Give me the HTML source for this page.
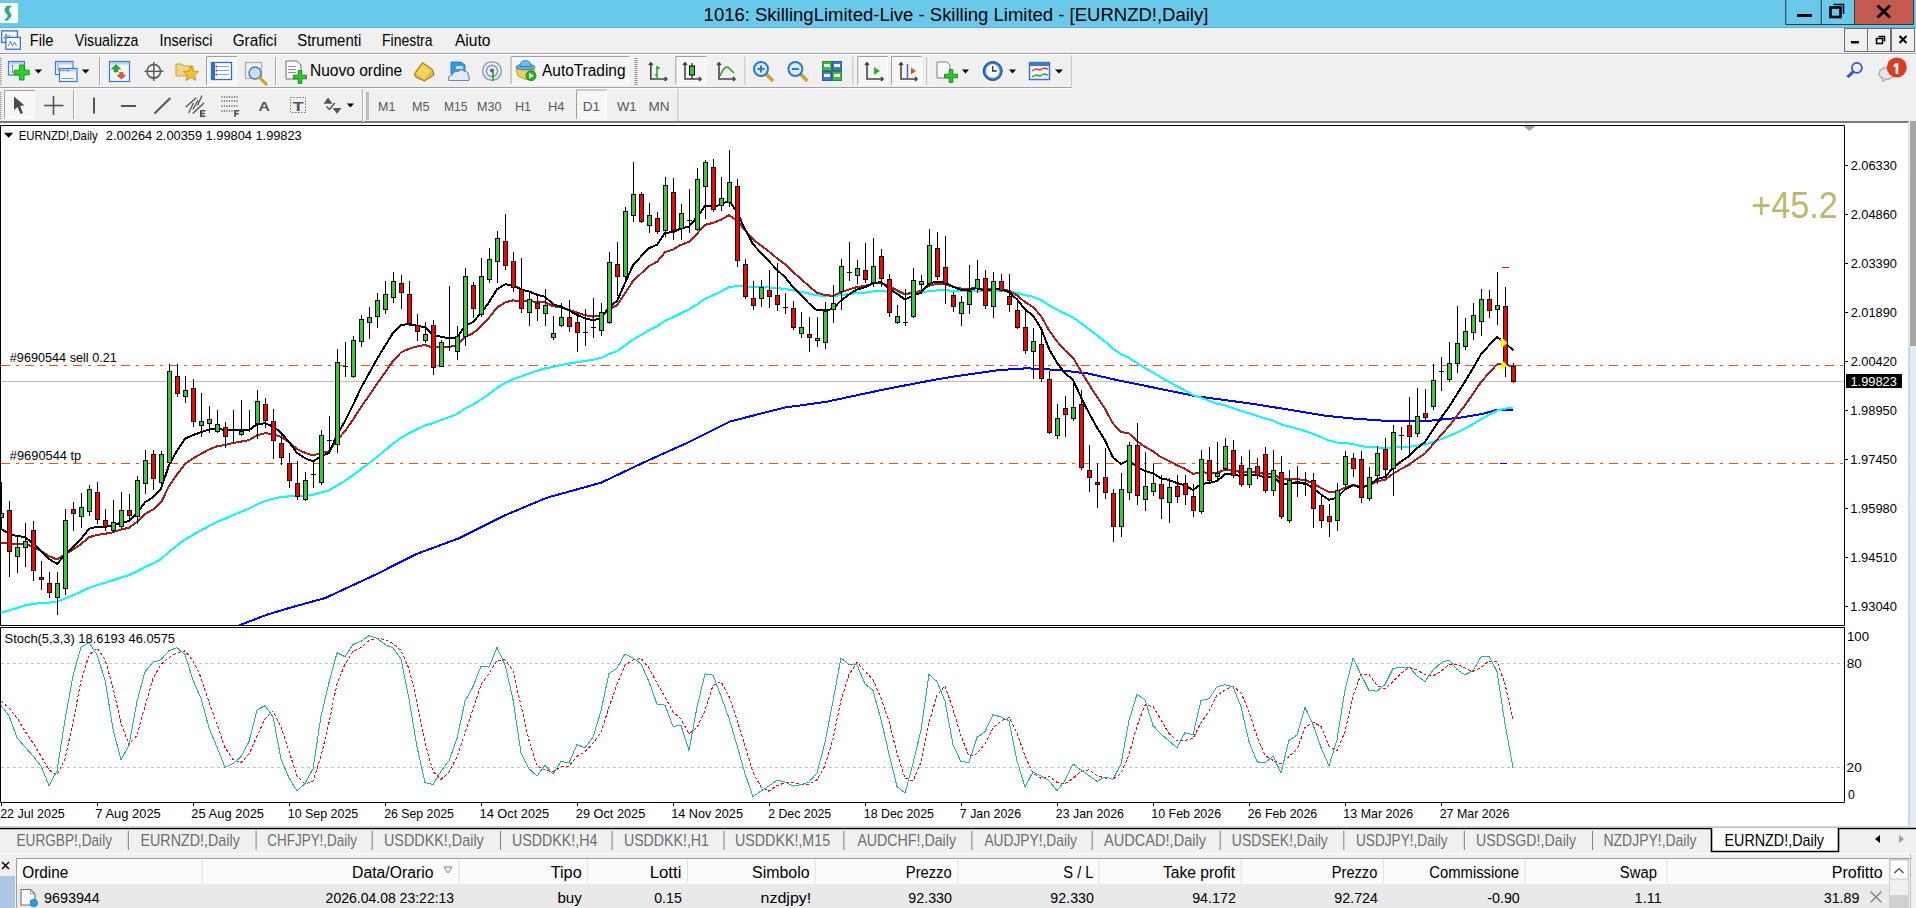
<!DOCTYPE html>
<html><head><meta charset="utf-8"><style>
html,body{margin:0;padding:0;background:#F0F0F0;overflow:hidden;width:1916px;height:908px}
svg{display:block;font-family:"Liberation Sans", sans-serif}
</style></head><body>
<svg width="1916" height="908" viewBox="0 0 1916 908" shape-rendering="auto">
<rect x="0" y="0" width="1916" height="908" fill="#F0F0F0" />
<rect x="0" y="0" width="1916" height="27" fill="#69C9EA" />
<line x1="0" y1="27.5" x2="1916" y2="27.5" stroke="#5BB3D2" stroke-width="1" />
<rect x="0" y="3" width="18" height="20" fill="#FFFFFF" />
<path d="M6.5,5.7 L12,5.7 L9.5,8.6 Q8.2,10.2 9.6,11.8 L11.2,13.8 Q12.2,15.5 10.6,17.4 L7.4,20.6 L3.9,20.6 L7.2,17.2 Q8.2,16 7.2,14.6 L5,12.2 Q3.8,10.4 5,8.6 Z" fill="#22AE8A"/>
<text x="703.61" y="20.7" font-size="18.6" fill="#000" font-weight="normal" textLength="504.73" lengthAdjust="spacingAndGlyphs" >1016: SkillingLimited-Live - Skilling Limited - [EURNZD!,Daily]</text>
<rect x="1854.5" y="0" width="59" height="24.5" fill="#C45A50" />
<path d="M1785.8,0 V24.5 H1913.5 V0 M1821.2,0 V24.5 M1854.5,0 V24.5" fill="none" stroke="#383838" stroke-width="1"/>
<rect x="1797" y="14" width="15" height="3" fill="#000" />
<path d="M1833.5,4.5 h10 v9.5" fill="none" stroke="#000" stroke-width="1.5"/><rect x="1830.5" y="7.5" width="10" height="9.5" fill="none" stroke="#000" stroke-width="2.6"/>
<path d="M1877.5,5.5 L1890,17.5 M1890,5.5 L1877.5,17.5" stroke="#000" stroke-width="3"/>
<rect x="0" y="28" width="1916" height="25" fill="#F0F0F0" />
<line x1="0" y1="53.5" x2="1916" y2="53.5" stroke="#A0A0A0" stroke-width="1" />
<rect x="1.7" y="30.9" width="15.7" height="11.5" fill="#F4F8FF" stroke="#3A6ED8" stroke-width="1.3" />
<path d="M4,39 l2,-5 l2,4 l2,-3" fill="none" stroke="#4A7AE0" stroke-width="1"/>
<rect x="5.9" y="37.4" width="14.4" height="11.8" fill="#FFFFFF" stroke="#3A6ED8" stroke-width="1.3" />
<path d="M8.5,46 l2,-5 l2,5 l2,-4 l2,4" fill="none" stroke="#4A7AE0" stroke-width="1"/>
<text x="29.83" y="46.3" font-size="16.4" fill="#000" font-weight="normal" textLength="23.66" lengthAdjust="spacingAndGlyphs" >File</text>
<text x="74.73" y="46.3" font-size="16.4" fill="#000" font-weight="normal" textLength="63.76" lengthAdjust="spacingAndGlyphs" >Visualizza</text>
<text x="159.50" y="46.3" font-size="16.4" fill="#000" font-weight="normal" textLength="52.98" lengthAdjust="spacingAndGlyphs" >Inserisci</text>
<text x="232.63" y="46.3" font-size="16.4" fill="#000" font-weight="normal" textLength="44.33" lengthAdjust="spacingAndGlyphs" >Grafici</text>
<text x="297.23" y="46.3" font-size="16.4" fill="#000" font-weight="normal" textLength="64.01" lengthAdjust="spacingAndGlyphs" >Strumenti</text>
<text x="381.98" y="46.3" font-size="16.4" fill="#000" font-weight="normal" textLength="50.55" lengthAdjust="spacingAndGlyphs" >Finestra</text>
<text x="454.90" y="46.3" font-size="16.4" fill="#000" font-weight="normal" textLength="35.51" lengthAdjust="spacingAndGlyphs" >Aiuto</text>
<rect x="1844.5" y="28.5" width="23" height="23" fill="#F0F0F0" stroke="#707070" stroke-width="1" />
<rect x="1867.5" y="28.5" width="23" height="23" fill="#F0F0F0" stroke="#707070" stroke-width="1" />
<rect x="1891.5" y="28.5" width="23" height="23" fill="#F0F0F0" stroke="#707070" stroke-width="1" />
<rect x="1851" y="41" width="8" height="2.5" fill="#000" />
<path d="M1876.5,38.5 h6 v5 h-6 z M1878.5,36.5 h6 v5" fill="none" stroke="#000" stroke-width="1.5"/>
<path d="M1899.5,36 L1906.5,43 M1906.5,36 L1899.5,43" stroke="#000" stroke-width="2"/>
<line x1="0" y1="54.5" x2="1916" y2="54.5" stroke="#FFFFFF" stroke-width="1" />
<line x1="0" y1="87.5" x2="1071.5" y2="87.5" stroke="#A0A0A0" stroke-width="1" />
<line x1="0" y1="88.5" x2="1072" y2="88.5" stroke="#FFFFFF" stroke-width="1" />
<rect x="0" y="121" width="1908.7" height="2" fill="#7A7A7A" />
<rect x="0" y="123" width="1908" height="705" fill="#FFFFFF"/>
<rect x="-1.5" y="58" width="3" height="1" fill="#8C8C8C" />
<rect x="-1.5" y="60" width="3" height="1" fill="#8C8C8C" />
<rect x="-1.5" y="62" width="3" height="1" fill="#8C8C8C" />
<rect x="-1.5" y="64" width="3" height="1" fill="#8C8C8C" />
<rect x="-1.5" y="66" width="3" height="1" fill="#8C8C8C" />
<rect x="-1.5" y="68" width="3" height="1" fill="#8C8C8C" />
<rect x="-1.5" y="70" width="3" height="1" fill="#8C8C8C" />
<rect x="-1.5" y="72" width="3" height="1" fill="#8C8C8C" />
<rect x="-1.5" y="74" width="3" height="1" fill="#8C8C8C" />
<rect x="-1.5" y="76" width="3" height="1" fill="#8C8C8C" />
<rect x="-1.5" y="78" width="3" height="1" fill="#8C8C8C" />
<rect x="-1.5" y="80" width="3" height="1" fill="#8C8C8C" />
<rect x="-1.5" y="82" width="3" height="1" fill="#8C8C8C" />
<rect x="-1.5" y="84" width="3" height="1" fill="#8C8C8C" />
<rect x="8.5" y="61.5" width="16" height="13.5" fill="#F2F7FD" stroke="#3C7BD0" stroke-width="1.2" />
<rect x="9" y="62" width="15" height="2.5" fill="#B8D2F0" />
<path d="M12.5,65 v8 M11,66.5 l1.5,-1.5 l1.5,1.5 M11,71.5 l1.5,1.5 l1.5,-1.5" fill="none" stroke="#7A9AC0" stroke-width="1"/>
<path d="M19.4,65.0 h4.6 v5.2 h5.2 v4.6 h-5.2 v5.2 h-4.6 v-5.2 h-5.2 v-4.6 h5.2 z" fill="#2AD42A" stroke="#129A12" stroke-width="1"/>
<path d="M34.7,69.5 L42,69.5 L38.35,73.5 Z" fill="#000"/>
<rect x="55.5" y="61.5" width="17.5" height="13" fill="#F2F7FD" stroke="#3C7BD0" stroke-width="1.2" />
<rect x="56" y="62" width="16.5" height="2.5" fill="#B8D2F0" />
<rect x="59.5" y="68.5" width="17.5" height="13" fill="#F2F7FD" stroke="#3C7BD0" stroke-width="1.2" />
<rect x="60" y="69" width="16.5" height="2.5" fill="#B8D2F0" />
<path d="M58,64.5 v6 h11 M67.5,69 l1.5,1.5 l-1.5,1.5 M61.5,78.5 h12" fill="none" stroke="#7A9AC0" stroke-width="1"/>
<path d="M81.8,69.5 L89.4,69.5 L85.6,73.5 Z" fill="#000"/>
<line x1="99.5" y1="57" x2="99.5" y2="85" stroke="#A8A8A8" stroke-width="1" />
<line x1="100.5" y1="57" x2="100.5" y2="85" stroke="#FFFFFF" stroke-width="1" />
<rect x="109.5" y="61.5" width="20" height="20" fill="#F2F7FD" stroke="#3C7BD0" stroke-width="1.2" />
<rect x="110" y="62" width="19" height="2.5" fill="#B8D2F0" />
<path d="M111.4,69 l4.6,-4.5 l4.6,4.5 h-2.8 v3 h-3.6 v-3 z" fill="#22B022" stroke="#128012" stroke-width="0.6"/><path d="M117,75.3 l4.35,3.6 l4.35,-3.6 h-2.6 v-2.8 h-3.5 v2.8 z" fill="#E85A2A" stroke="#B03A10" stroke-width="0.6"/>
<circle cx="153.8" cy="71.3" r="6.8" fill="none" stroke="#555" stroke-width="1.6"/>
<line x1="144.5" y1="71.3" x2="163.5" y2="71.3" stroke="#555" stroke-width="1.4" />
<line x1="153.8" y1="62" x2="153.8" y2="81" stroke="#555" stroke-width="1.4" />
<path d="M176,64 h6 l2,2 h9 v10 h-17 z" fill="#F3D77A" stroke="#C8A040" stroke-width="1"/>
<path d="M191,66 l2.3,5 5.4,0.6 -4,3.6 1.2,5.3 -4.9,-2.8 -4.9,2.8 1.2,-5.3 -4,-3.6 5.4,-0.6 z" fill="#F5C030" stroke="#B88A10" stroke-width="0.8"/>
<rect x="206" y="56" width="31" height="29" fill="#F6F6F6" />
<path d="M206.5,85 V56.5 H237" fill="none" stroke="#A0A0A0" stroke-width="1"/>
<path d="M207,84.5 H236.5 V57" fill="none" stroke="#FFFFFF" stroke-width="1"/>
<rect x="211.5" y="62.5" width="20" height="17" fill="#FFFFFF" stroke="#2F6FC0" stroke-width="1.3" />
<rect x="212" y="63" width="3" height="16" fill="#2F6FC0" />
<line x1="217" y1="66.5" x2="229" y2="66.5" stroke="#7BA7DA" stroke-width="1" />
<rect x="215.5" y="65.5" width="1.5" height="2" fill="#D03030" />
<line x1="217" y1="70.5" x2="229" y2="70.5" stroke="#7BA7DA" stroke-width="1" />
<rect x="215.5" y="69.5" width="1.5" height="2" fill="#D03030" />
<line x1="217" y1="74.5" x2="229" y2="74.5" stroke="#7BA7DA" stroke-width="1" />
<rect x="215.5" y="73.5" width="1.5" height="2" fill="#D03030" />
<rect x="245.5" y="62.5" width="16" height="16" fill="#F0F0F0" stroke="#B0B0B0" stroke-width="1.3" />
<circle cx="255" cy="73" r="6" fill="#C8DDF0" stroke="#4A7FC0" stroke-width="1.5"/>
<line x1="259" y1="77" x2="267" y2="85" stroke="#D4A020" stroke-width="3" />
<line x1="275.5" y1="57" x2="275.5" y2="85" stroke="#A8A8A8" stroke-width="1" />
<line x1="276.5" y1="57" x2="276.5" y2="85" stroke="#FFFFFF" stroke-width="1" />
<path d="M286,61 h11 l4,4 v14 h-15 z" fill="#FAFAFA" stroke="#707070" stroke-width="1"/>
<line x1="288" y1="66.5" x2="296" y2="66.5" stroke="#909090" stroke-width="1" />
<line x1="288" y1="69.5" x2="296" y2="69.5" stroke="#909090" stroke-width="1" />
<line x1="288" y1="72.5" x2="296" y2="72.5" stroke="#909090" stroke-width="1" />
<path d="M298.2,70.5 h3.6 v4.7 h4.7 v3.6 h-4.7 v4.7 h-3.6 v-4.7 h-4.7 v-3.6 h4.7 z" fill="#28C828" stroke="#0A7A0A" stroke-width="0.8"/>
<text x="310.06" y="76.1" font-size="16" fill="#000" font-weight="normal" textLength="92.19" lengthAdjust="spacingAndGlyphs" >Nuovo ordine</text>
<path d="M414.5,73.5 L422.5,62.5 L432.5,69.5 L434,75 L424.5,81 L415.5,77 Z" fill="#E9B93A" stroke="#9A6A14" stroke-width="1"/><path d="M416,74 L423,64.5 L431,70.5 L424,79 Z" fill="#F6D65A"/>
<path d="M451,62 h10 l4,3 v9 h-14 z" fill="#2E9AF0" stroke="#1A6AC0" stroke-width="0.8"/><rect x="456" y="66" width="7" height="3" fill="#BFE3FF"/>
<path d="M449,80.5 q-1.5,-4.5 3,-5.5 q1,-4 6,-3.5 q3,-3 7,0 q4,0 3,4 q2.5,1.5 0.5,5 z" fill="#E4ECF6" stroke="#6C88B0" stroke-width="1.1"/>
<circle cx="492" cy="71" r="9.3" fill="none" stroke="#8FA2BE" stroke-width="1.6"/><circle cx="492" cy="71" r="5.6" fill="none" stroke="#8A9AB2" stroke-width="1.6"/><circle cx="492" cy="70.6" r="2" fill="#2A62D0"/><path d="M493,71 v10" stroke="#2BB02B" stroke-width="1.8"/>
<rect x="510.5" y="56" width="118.5" height="28.5" fill="#F6F6F6" />
<path d="M511.0,84.5 V56.5 H629" fill="none" stroke="#A0A0A0" stroke-width="1"/>
<path d="M511.5,84.0 H628.5 V57" fill="none" stroke="#FFFFFF" stroke-width="1"/>
<path d="M518,76 l-2,-7 h19 l-2,6 l-6,5 z" fill="#F2D24A" stroke="#B08A18" stroke-width="0.8"/>
<ellipse cx="525.5" cy="67" rx="9.5" ry="3" fill="#5AB0E6" stroke="#2A78B8" stroke-width="0.8"/><path d="M520,66.5 q0,-6 5.5,-6 q5.5,0 5.5,6 z" fill="#6ABCF0" stroke="#2A78B8" stroke-width="0.8"/>
<circle cx="531" cy="75.7" r="5" fill="#22B422" stroke="#128012" stroke-width="0.8"/><path d="M529.3,72.8 l4.6,2.9 l-4.6,2.9 z" fill="#FFF"/>
<text x="542.00" y="76.0" font-size="16" fill="#000" font-weight="normal" textLength="83.52" lengthAdjust="spacingAndGlyphs" >AutoTrading</text>
<rect x="634.5" y="58" width="3" height="1" fill="#8C8C8C" />
<rect x="634.5" y="60" width="3" height="1" fill="#8C8C8C" />
<rect x="634.5" y="62" width="3" height="1" fill="#8C8C8C" />
<rect x="634.5" y="64" width="3" height="1" fill="#8C8C8C" />
<rect x="634.5" y="66" width="3" height="1" fill="#8C8C8C" />
<rect x="634.5" y="68" width="3" height="1" fill="#8C8C8C" />
<rect x="634.5" y="70" width="3" height="1" fill="#8C8C8C" />
<rect x="634.5" y="72" width="3" height="1" fill="#8C8C8C" />
<rect x="634.5" y="74" width="3" height="1" fill="#8C8C8C" />
<rect x="634.5" y="76" width="3" height="1" fill="#8C8C8C" />
<rect x="634.5" y="78" width="3" height="1" fill="#8C8C8C" />
<rect x="634.5" y="80" width="3" height="1" fill="#8C8C8C" />
<rect x="634.5" y="82" width="3" height="1" fill="#8C8C8C" />
<rect x="634.5" y="84" width="3" height="1" fill="#8C8C8C" />
<path d="M650.8,63 v16 h16 M648.8,65 l2,-2 l2,2 M664.8,77 l2,2 l-2,2" fill="none" stroke="#444" stroke-width="1.6"/>
<line x1="657" y1="66" x2="657" y2="78" stroke="#22A022" stroke-width="1.5" />
<line x1="655" y1="75" x2="657" y2="75" stroke="#22A022" stroke-width="1.5" />
<line x1="657" y1="68" x2="660" y2="68" stroke="#22A022" stroke-width="1.5" />
<rect x="675.3" y="56" width="31.0" height="28.799999999999997" fill="#F6F6F6" />
<path d="M675.8,84.8 V56.5 H706.3" fill="none" stroke="#A0A0A0" stroke-width="1"/>
<path d="M676.3,84.3 H705.8 V57" fill="none" stroke="#FFFFFF" stroke-width="1"/>
<path d="M685,63 v16 h16 M683,65 l2,-2 l2,2 M699,77 l2,2 l-2,2" fill="none" stroke="#444" stroke-width="1.6"/>
<line x1="692" y1="63" x2="692" y2="79" stroke="#000" stroke-width="1" />
<rect x="689.5" y="66" width="5" height="9" fill="#32CD32" stroke="#000" stroke-width="1" />
<path d="M719,63 v16 h16 M717,65 l2,-2 l2,2 M733,77 l2,2 l-2,2" fill="none" stroke="#444" stroke-width="1.6"/>
<path d="M720,76 q5,-12 9,-8 q3,3 5,5" fill="none" stroke="#22A022" stroke-width="1.5"/>
<line x1="745.1" y1="57" x2="745.1" y2="85" stroke="#A8A8A8" stroke-width="1" />
<line x1="746.1" y1="57" x2="746.1" y2="85" stroke="#FFFFFF" stroke-width="1" />
<line x1="765" y1="73" x2="773" y2="81" stroke="#D4A020" stroke-width="3.5"/>
<circle cx="761" cy="69" r="7" fill="#D8ECFA" stroke="#2A7AD0" stroke-width="2"/>
<line x1="757.5" y1="69" x2="764.5" y2="69" stroke="#2A7AD0" stroke-width="2" />
<line x1="761" y1="65.5" x2="761" y2="72.5" stroke="#2A7AD0" stroke-width="2" />
<line x1="799.4" y1="73" x2="807.4" y2="81" stroke="#D4A020" stroke-width="3.5"/>
<circle cx="795.4" cy="69" r="7" fill="#D8ECFA" stroke="#2A7AD0" stroke-width="2"/>
<line x1="791.9" y1="69" x2="798.9" y2="69" stroke="#2A7AD0" stroke-width="2" />
<rect x="822.5" y="61.5" width="9" height="9" fill="#3CB83C" stroke="#2A902A" stroke-width="1" />
<rect x="832.5" y="61.5" width="9" height="9" fill="#3A7AD8" stroke="#2A5AB0" stroke-width="1" />
<rect x="822.5" y="71.5" width="9" height="9" fill="#3A7AD8" stroke="#2A5AB0" stroke-width="1" />
<rect x="832.5" y="71.5" width="9" height="9" fill="#3CB83C" stroke="#2A902A" stroke-width="1" />
<rect x="824" y="64" width="6" height="3" fill="#FFFFFF" />
<rect x="834" y="64" width="6" height="3" fill="#FFFFFF" />
<rect x="824" y="74" width="6" height="3" fill="#FFFFFF" />
<rect x="834" y="74" width="6" height="3" fill="#FFFFFF" />
<line x1="853.1" y1="57" x2="853.1" y2="85" stroke="#A8A8A8" stroke-width="1" />
<line x1="854.1" y1="57" x2="854.1" y2="85" stroke="#FFFFFF" stroke-width="1" />
<rect x="857.3" y="56" width="30.700000000000045" height="28.799999999999997" fill="#F6F6F6" />
<path d="M857.8,84.8 V56.5 H888" fill="none" stroke="#A0A0A0" stroke-width="1"/>
<path d="M858.3,84.3 H887.5 V57" fill="none" stroke="#FFFFFF" stroke-width="1"/>
<path d="M867,63 v16 h16 M865,65 l2,-2 l2,2 M881,77 l2,2 l-2,2" fill="none" stroke="#444" stroke-width="1.6"/>
<path d="M874,67 l6,4 l-6,4 z" fill="#2AB02A"/>
<rect x="891" y="56" width="30.700000000000045" height="28.799999999999997" fill="#F6F6F6" />
<path d="M891.5,84.8 V56.5 H921.7" fill="none" stroke="#A0A0A0" stroke-width="1"/>
<path d="M892,84.3 H921.2 V57" fill="none" stroke="#FFFFFF" stroke-width="1"/>
<path d="M901,63 v16 h16 M899,65 l2,-2 l2,2 M915,77 l2,2 l-2,2" fill="none" stroke="#444" stroke-width="1.6"/>
<line x1="907.5" y1="64" x2="907.5" y2="78" stroke="#3A6AC0" stroke-width="1.5" />
<path d="M916,71 l-5,-3.5 v7 z" fill="#E05020"/>
<line x1="926.9" y1="57" x2="926.9" y2="85" stroke="#A8A8A8" stroke-width="1" />
<line x1="927.9" y1="57" x2="927.9" y2="85" stroke="#FFFFFF" stroke-width="1" />
<path d="M937,62 h10 l3,3 v13 h-13 z" fill="#F8F8F8" stroke="#808080"/>
<path d="M949.2,69.5 h3.6 v4.7 h4.7 v3.6 h-4.7 v4.7 h-3.6 v-4.7 h-4.7 v-3.6 h4.7 z" fill="#28C828" stroke="#0A7A0A" stroke-width="0.8"/>
<path d="M962,69.5 L969,69.5 L965.5,73.5 Z" fill="#000"/>
<circle cx="992.7" cy="71" r="9.5" fill="#2A78D0" stroke="#1A4A90" stroke-width="1"/><circle cx="992.7" cy="71" r="7" fill="#F4F8FC"/><path d="M992.7,66 v5 h4" fill="none" stroke="#333" stroke-width="1.3"/>
<path d="M1009,69.5 L1016,69.5 L1012.5,73.5 Z" fill="#000"/>
<rect x="1029.5" y="62.5" width="20" height="17" fill="#F4F8FC" stroke="#3A78C8" stroke-width="1.5" />
<rect x="1030" y="63" width="19" height="3" fill="#3A78C8" />
<path d="M1032,71 l4,-2 l4,1 l4,-2 l4,1" fill="none" stroke="#C04020" stroke-width="1.3"/><path d="M1032,77 l4,-2 l4,1 l4,-2 l4,1" fill="none" stroke="#28A028" stroke-width="1.3"/>
<path d="M1055,69.5 L1063,69.5 L1059.0,73.5 Z" fill="#000"/>
<line x1="1071.5" y1="55" x2="1071.5" y2="87" stroke="#C8C8C8" stroke-width="1" />
<circle cx="1856.9" cy="67.8" r="5" fill="none" stroke="#2A5ACB" stroke-width="1.7"/>
<line x1="1853.3" y1="71.6" x2="1847.5" y2="77.3" stroke="#2A5ACB" stroke-width="3" />
<ellipse cx="1886.5" cy="73.5" rx="7.5" ry="5.8" fill="#E6E6EE" stroke="#A8A8A8" stroke-width="1.3"/><path d="M1883,78.5 l-0.5,3 l4,-2.5" fill="#E6E6EE" stroke="#A0A0A0" stroke-width="1"/>
<circle cx="1896.8" cy="67.4" r="10" fill="#E03A20"/>
<path d="M1895.6,63 L1898.3,63 L1898.3,74 L1895.6,74 L1895.6,66.3 L1893.6,67.4 L1893.6,65 Z" fill="#FFFFFF"/>
<rect x="-1.5" y="92" width="3" height="1" fill="#8C8C8C" />
<rect x="-1.5" y="94" width="3" height="1" fill="#8C8C8C" />
<rect x="-1.5" y="96" width="3" height="1" fill="#8C8C8C" />
<rect x="-1.5" y="98" width="3" height="1" fill="#8C8C8C" />
<rect x="-1.5" y="100" width="3" height="1" fill="#8C8C8C" />
<rect x="-1.5" y="102" width="3" height="1" fill="#8C8C8C" />
<rect x="-1.5" y="104" width="3" height="1" fill="#8C8C8C" />
<rect x="-1.5" y="106" width="3" height="1" fill="#8C8C8C" />
<rect x="-1.5" y="108" width="3" height="1" fill="#8C8C8C" />
<rect x="-1.5" y="110" width="3" height="1" fill="#8C8C8C" />
<rect x="-1.5" y="112" width="3" height="1" fill="#8C8C8C" />
<rect x="-1.5" y="114" width="3" height="1" fill="#8C8C8C" />
<rect x="-1.5" y="116" width="3" height="1" fill="#8C8C8C" />
<rect x="-1.5" y="118" width="3" height="1" fill="#8C8C8C" />
<rect x="4" y="90" width="31" height="28.5" fill="#F6F6F6" />
<path d="M4.5,118.5 V90.5 H35" fill="none" stroke="#A0A0A0" stroke-width="1"/>
<path d="M5,118.0 H34.5 V91" fill="none" stroke="#FFFFFF" stroke-width="1"/>
<path d="M14,96.5 L14,110 L17.5,107 L20.5,114 L23,113 L20,106 L24.5,105.5 Z" fill="#4A4A4A"/>
<line x1="44" y1="105.5" x2="63.5" y2="105.5" stroke="#555" stroke-width="1.6" />
<line x1="53.5" y1="96" x2="53.5" y2="115" stroke="#555" stroke-width="1.6" />
<line x1="73.5" y1="91" x2="73.5" y2="119" stroke="#A8A8A8" stroke-width="1" />
<line x1="74.5" y1="91" x2="74.5" y2="119" stroke="#FFFFFF" stroke-width="1" />
<line x1="94" y1="97.6" x2="94" y2="113.5" stroke="#555" stroke-width="2" />
<line x1="121" y1="106" x2="136" y2="106" stroke="#555" stroke-width="2" />
<line x1="154.5" y1="113.5" x2="170.4" y2="98" stroke="#555" stroke-width="2" />
<path d="M185.7,107 L196.4,97.7 M192.7,113.4 L204,103 M188.5,113 L193.5,103 M193,109.5 L198,100 M197.5,105.5 L202,95.5" fill="none" stroke="#505050" stroke-width="1.3"/>
<path d="M200,110 h5.4 v1.6 h-3.6 v1.2 h3 v1.5 h-3 v1.2 h3.6 v1.6 h-5.4 z" fill="#505050"/>
<line x1="221.4" y1="97" x2="238.5" y2="97" stroke="#606060" stroke-width="1.3" stroke-dasharray="1.2,1.3"/>
<line x1="221.4" y1="101" x2="238.5" y2="101" stroke="#606060" stroke-width="1.3" stroke-dasharray="1.2,1.3"/>
<line x1="221.4" y1="106" x2="238.5" y2="106" stroke="#606060" stroke-width="1.3" stroke-dasharray="1.2,1.3"/>
<line x1="221.4" y1="111" x2="233" y2="111" stroke="#606060" stroke-width="1.3" stroke-dasharray="1.2,1.3"/>
<path d="M234.2,110 h5 v1.6 h-3.2 v1.4 h2.6 v1.5 h-2.6 v2.2 h-1.8 z" fill="#505050"/>
<text x="258.61" y="111.2" font-size="13.5" fill="#555" font-weight="bold" textLength="11.32" lengthAdjust="spacingAndGlyphs" >A</text>
<rect x="290.5" y="97.5" width="15" height="15" fill="none" stroke="#777" stroke-dasharray="1.5,1.5"/>
<text x="292.82" y="110.5" font-size="12.5" fill="#555" font-weight="bold" textLength="10.87" lengthAdjust="spacingAndGlyphs" >T</text>
<path d="M323.5,103.7 L328,97.4 L332.5,103.7 Z M332.5,108 L341.5,108 L337,113.8 Z" fill="#555"/><path d="M326.5,106.5 L329.5,109.5 L334.7,103" fill="none" stroke="#555" stroke-width="1.5"/>
<path d="M346.8,103.5 L354,103.5 L350.4,107.5 Z" fill="#000"/>
<line x1="362.4" y1="89" x2="362.4" y2="122" stroke="#A8A8A8" stroke-width="1" />
<line x1="363.4" y1="89" x2="363.4" y2="122" stroke="#FFFFFF" stroke-width="1" />
<rect x="366" y="92.5" width="3" height="1" fill="#8C8C8C" />
<rect x="366" y="94.5" width="3" height="1" fill="#8C8C8C" />
<rect x="366" y="96.5" width="3" height="1" fill="#8C8C8C" />
<rect x="366" y="98.5" width="3" height="1" fill="#8C8C8C" />
<rect x="366" y="100.5" width="3" height="1" fill="#8C8C8C" />
<rect x="366" y="102.5" width="3" height="1" fill="#8C8C8C" />
<rect x="366" y="104.5" width="3" height="1" fill="#8C8C8C" />
<rect x="366" y="106.5" width="3" height="1" fill="#8C8C8C" />
<rect x="366" y="108.5" width="3" height="1" fill="#8C8C8C" />
<rect x="366" y="110.5" width="3" height="1" fill="#8C8C8C" />
<rect x="366" y="112.5" width="3" height="1" fill="#8C8C8C" />
<rect x="366" y="114.5" width="3" height="1" fill="#8C8C8C" />
<rect x="366" y="116.5" width="3" height="1" fill="#8C8C8C" />
<rect x="366" y="118.5" width="3" height="1" fill="#8C8C8C" />
<text x="378.00" y="110.5" font-size="13" fill="#585858" font-weight="normal" textLength="17.35" lengthAdjust="spacingAndGlyphs" >M1</text>
<text x="411.99" y="110.5" font-size="13" fill="#585858" font-weight="normal" textLength="17.50" lengthAdjust="spacingAndGlyphs" >M5</text>
<text x="444.04" y="110.5" font-size="13" fill="#585858" font-weight="normal" textLength="23.45" lengthAdjust="spacingAndGlyphs" >M15</text>
<text x="476.99" y="110.5" font-size="13" fill="#585858" font-weight="normal" textLength="24.45" lengthAdjust="spacingAndGlyphs" >M30</text>
<text x="514.99" y="110.5" font-size="13" fill="#585858" font-weight="normal" textLength="16.12" lengthAdjust="spacingAndGlyphs" >H1</text>
<text x="547.97" y="110.5" font-size="13" fill="#585858" font-weight="normal" textLength="16.46" lengthAdjust="spacingAndGlyphs" >H4</text>
<rect x="576" y="89.5" width="30.700000000000045" height="29.5" fill="#F6F6F6" />
<path d="M576.5,119 V90.0 H606.7" fill="none" stroke="#A0A0A0" stroke-width="1"/>
<path d="M577,118.5 H606.2 V90.5" fill="none" stroke="#FFFFFF" stroke-width="1"/>
<text x="582.71" y="110.5" font-size="13" fill="#585858" font-weight="normal" textLength="17.34" lengthAdjust="spacingAndGlyphs" >D1</text>
<text x="616.93" y="110.5" font-size="13" fill="#585858" font-weight="normal" textLength="19.66" lengthAdjust="spacingAndGlyphs" >W1</text>
<text x="648.42" y="110.5" font-size="13" fill="#585858" font-weight="normal" textLength="20.96" lengthAdjust="spacingAndGlyphs" >MN</text>
<line x1="678.2" y1="89" x2="678.2" y2="121" stroke="#A8A8A8" stroke-width="1" />
<line x1="679.2" y1="89" x2="679.2" y2="121" stroke="#FFFFFF" stroke-width="1" />
<line x1="1908.5" y1="122" x2="1908.5" y2="827" stroke="#D8D8D8" stroke-width="1" />
<rect x="1910" y="121" width="6" height="225" fill="#A6A6A6" />
<rect x="1910" y="346" width="6" height="481" fill="#E4ECF8" />
<line x1="1909.5" y1="346" x2="1909.5" y2="827" stroke="#C8D4E8" stroke-width="1" />
<defs><clipPath id="cm"><rect x="1" y="126" width="1843" height="499"/></clipPath><clipPath id="cs"><rect x="1" y="628" width="1843" height="174"/></clipPath></defs>
<path d="M0.5,125.5 H1844.5 V625.5 H0.5 Z" fill="none" stroke="#000" stroke-width="1"/>
<path d="M0.5,627.5 H1844.5 V802.5 H0.5 Z" fill="none" stroke="#000" stroke-width="1"/>
<path d="M1523.5,126 h12 l-6,5 z" fill="#A0A0A0"/>
<line x1="1845" y1="165.5" x2="1848" y2="165.5" stroke="#000" stroke-width="1" />
<text x="1850.66" y="169.6" font-size="12.3" fill="#000" font-weight="normal" textLength="46.29" lengthAdjust="spacingAndGlyphs" >2.06330</text>
<line x1="1845" y1="214.5" x2="1848" y2="214.5" stroke="#000" stroke-width="1" />
<text x="1850.66" y="218.6" font-size="12.3" fill="#000" font-weight="normal" textLength="46.29" lengthAdjust="spacingAndGlyphs" >2.04860</text>
<line x1="1845" y1="263.5" x2="1848" y2="263.5" stroke="#000" stroke-width="1" />
<text x="1850.66" y="267.6" font-size="12.3" fill="#000" font-weight="normal" textLength="46.29" lengthAdjust="spacingAndGlyphs" >2.03390</text>
<line x1="1845" y1="312.5" x2="1848" y2="312.5" stroke="#000" stroke-width="1" />
<text x="1850.66" y="316.6" font-size="12.3" fill="#000" font-weight="normal" textLength="46.29" lengthAdjust="spacingAndGlyphs" >2.01890</text>
<line x1="1845" y1="361.5" x2="1848" y2="361.5" stroke="#000" stroke-width="1" />
<text x="1850.66" y="365.6" font-size="12.3" fill="#000" font-weight="normal" textLength="46.29" lengthAdjust="spacingAndGlyphs" >2.00420</text>
<line x1="1845" y1="410.5" x2="1848" y2="410.5" stroke="#000" stroke-width="1" />
<text x="1850.33" y="414.6" font-size="12.3" fill="#000" font-weight="normal" textLength="46.62" lengthAdjust="spacingAndGlyphs" >1.98950</text>
<line x1="1845" y1="459.5" x2="1848" y2="459.5" stroke="#000" stroke-width="1" />
<text x="1850.33" y="463.6" font-size="12.3" fill="#000" font-weight="normal" textLength="46.62" lengthAdjust="spacingAndGlyphs" >1.97450</text>
<line x1="1845" y1="508.5" x2="1848" y2="508.5" stroke="#000" stroke-width="1" />
<text x="1850.33" y="512.6" font-size="12.3" fill="#000" font-weight="normal" textLength="46.62" lengthAdjust="spacingAndGlyphs" >1.95980</text>
<line x1="1845" y1="557.5" x2="1848" y2="557.5" stroke="#000" stroke-width="1" />
<text x="1850.33" y="561.6" font-size="12.3" fill="#000" font-weight="normal" textLength="46.62" lengthAdjust="spacingAndGlyphs" >1.94510</text>
<line x1="1845" y1="606.5" x2="1848" y2="606.5" stroke="#000" stroke-width="1" />
<text x="1850.33" y="610.6" font-size="12.3" fill="#000" font-weight="normal" textLength="46.62" lengthAdjust="spacingAndGlyphs" >1.93040</text>
<text x="1847.01" y="641.2" font-size="12.3" fill="#000" font-weight="normal" textLength="22.10" lengthAdjust="spacingAndGlyphs" >100</text>
<text x="1846.69" y="668.3" font-size="12.3" fill="#000" font-weight="normal" textLength="15.01" lengthAdjust="spacingAndGlyphs" >80</text>
<text x="1846.62" y="772.3" font-size="12.3" fill="#000" font-weight="normal" textLength="15.08" lengthAdjust="spacingAndGlyphs" >20</text>
<text x="1848.0" y="799.2" font-size="12.3" fill="#000" font-weight="normal" >0</text>
<g clip-path="url(#cm)">
<line x1="0" y1="381.5" x2="1844" y2="381.5" stroke="#C0C0C0" stroke-width="1" />
<line x1="1" y1="365.5" x2="1844" y2="365.5" stroke="#FF4A10" stroke-width="1" stroke-dasharray="9,6,3,6"/>
<line x1="1" y1="463.5" x2="1844" y2="463.5" stroke="#FF4A10" stroke-width="1" stroke-dasharray="9,6,3,6"/>
<polyline points="230.0,629.0 237.6,626.0 266.8,614.7 291.9,607.2 325.3,598.0 375.4,574.7 417.1,553.8 458.9,538.3 504.8,515.4 546.6,497.8 600.8,482.8 646.8,461.0 688.5,442.3 730.3,421.4 784.5,407.6 826.3,401.8 884.8,389.3 934.9,379.7 959.3,375.7 1000.0,370.0 1026.8,368.3 1057.6,369.9 1088.4,373.6 1119.3,380.6 1150.0,386.8 1196.0,396.2 1226.8,400.3 1257.6,404.6 1288.4,409.6 1325.4,415.7 1356.2,418.8 1396.0,421.5 1426.8,421.0 1457.6,418.0 1482.3,414.0 1497.7,409.6 1513.0,409.6" fill="none" stroke="#0000FF" stroke-width="2" stroke-linejoin="round" shape-rendering="crispEdges" />
<polyline points="1.0,612.9 9.0,610.5 17.0,608.0 25.0,605.4 33.0,604.0 41.0,603.0 49.0,602.6 57.0,601.8 65.0,598.6 73.0,595.3 81.0,591.8 89.0,587.8 97.0,585.1 105.0,582.8 113.0,580.4 121.0,577.6 129.0,575.2 137.0,571.4 145.0,567.0 153.0,563.5 161.0,559.2 169.0,551.9 177.0,545.6 185.0,539.5 193.0,534.9 201.0,530.4 209.0,526.0 217.0,522.0 225.0,518.7 233.0,515.2 241.0,511.9 249.0,508.6 257.0,504.4 265.0,501.1 273.0,498.7 281.0,497.0 289.0,496.4 297.0,496.4 305.0,495.7 313.0,494.9 321.0,492.5 329.0,490.5 337.0,485.5 345.0,480.8 353.0,475.3 361.0,469.1 369.0,463.2 377.0,456.8 385.0,450.4 393.0,443.7 401.0,437.8 409.0,433.3 417.0,429.3 425.0,425.5 433.0,423.2 441.0,420.0 449.0,417.2 457.0,414.0 465.0,408.6 473.0,404.6 481.0,399.6 489.0,394.1 497.0,387.9 505.0,383.1 513.0,379.3 521.0,376.5 529.0,373.5 537.0,370.9 545.0,368.4 553.0,367.0 561.0,365.0 569.0,363.5 577.0,362.3 585.0,361.1 593.0,359.7 601.0,357.9 609.0,354.1 617.0,351.1 625.0,345.6 633.0,339.6 641.0,335.0 649.0,330.3 657.0,326.4 665.0,320.8 673.0,317.3 681.0,313.2 689.0,309.5 697.0,304.4 705.0,298.8 713.0,295.3 721.0,291.5 729.0,287.2 737.0,286.1 745.0,286.5 753.0,287.2 761.0,287.2 769.0,287.5 777.0,288.2 785.0,288.9 793.0,290.4 801.0,291.8 809.0,293.6 817.0,295.3 825.0,296.0 833.0,296.2 841.0,295.0 849.0,294.1 857.0,293.1 865.0,292.6 873.0,291.5 881.0,291.0 889.0,291.8 897.0,292.8 905.0,294.0 913.0,293.4 921.0,292.9 929.0,291.1 937.0,290.4 945.0,290.2 953.0,290.8 961.0,291.2 969.0,291.2 977.0,290.7 985.0,291.3 993.0,290.9 1001.0,290.8 1009.0,291.4 1017.0,292.8 1025.0,295.0 1033.0,296.8 1041.0,300.0 1049.0,305.2 1057.0,309.6 1065.0,313.7 1073.0,317.4 1081.0,323.2 1089.0,329.3 1097.0,335.3 1105.0,341.5 1113.0,348.7 1121.0,354.3 1129.0,357.8 1137.0,363.2 1145.0,368.0 1153.0,372.5 1161.0,377.5 1169.0,381.8 1177.0,386.2 1185.0,390.4 1193.0,395.1 1201.0,397.6 1209.0,400.8 1217.0,403.7 1225.0,405.4 1233.0,408.1 1241.0,411.0 1249.0,413.3 1257.0,415.7 1265.0,418.6 1273.0,420.6 1281.0,424.4 1289.0,426.5 1297.0,428.7 1305.0,430.9 1313.0,433.9 1321.0,437.2 1329.0,440.5 1337.0,442.5 1345.0,443.0 1353.0,444.0 1361.0,446.1 1369.0,447.3 1377.0,447.5 1385.0,448.4 1393.0,447.7 1401.0,447.2 1409.0,446.8 1417.0,445.6 1425.0,444.5 1433.0,441.9 1441.0,439.2 1449.0,436.2 1457.0,432.5 1465.0,428.5 1473.0,424.1 1481.0,419.2 1489.0,414.9 1497.0,410.6 1505.0,408.7 1513.0,407.6" fill="none" stroke="#00FFFF" stroke-width="2" stroke-linejoin="round" shape-rendering="crispEdges" />
<polyline points="1.0,542.6 9.0,543.6 17.0,544.0 25.0,543.6 33.0,547.0 41.0,551.0 49.0,556.1 57.0,559.5 65.0,554.5 73.0,549.4 81.0,544.1 89.0,537.2 97.0,534.9 105.0,533.8 113.0,532.3 121.0,529.5 129.0,527.7 137.0,521.8 145.0,514.0 153.0,509.5 161.0,502.5 169.0,486.1 177.0,474.5 185.0,463.9 193.0,458.5 201.0,453.8 209.0,449.5 217.0,446.3 225.0,445.1 233.0,443.1 241.0,441.6 249.0,440.1 257.0,435.2 265.0,433.2 273.0,434.0 281.0,436.9 289.0,442.2 297.0,449.0 305.0,452.8 313.0,455.5 321.0,452.9 329.0,451.4 337.0,440.3 345.0,431.0 353.0,419.7 361.0,407.1 369.0,395.8 377.0,383.8 385.0,372.6 393.0,361.1 401.0,352.5 409.0,348.7 417.0,346.5 425.0,345.0 433.0,347.7 441.0,347.0 449.0,346.9 457.0,345.5 465.0,336.9 473.0,333.3 481.0,326.2 489.0,317.8 497.0,307.7 505.0,302.4 513.0,300.4 521.0,301.4 529.0,301.1 537.0,301.9 545.0,302.4 553.0,306.2 561.0,307.5 569.0,309.9 577.0,312.7 585.0,315.1 593.0,316.6 601.0,316.0 609.0,309.3 617.0,305.2 625.0,293.4 633.0,281.0 641.0,273.5 649.0,266.2 657.0,261.8 665.0,252.2 673.0,249.4 681.0,244.8 689.0,241.7 697.0,233.8 705.0,224.9 713.0,222.9 721.0,219.7 729.0,215.1 737.0,220.7 745.0,230.1 753.0,239.4 761.0,245.4 769.0,251.6 777.0,258.2 785.0,264.2 793.0,272.0 801.0,278.9 809.0,286.2 817.0,292.7 825.0,295.0 833.0,295.9 841.0,292.2 849.0,289.6 857.0,287.0 865.0,286.0 873.0,283.5 881.0,282.8 889.0,286.5 897.0,290.2 905.0,294.3 913.0,292.5 921.0,291.0 929.0,285.3 937.0,284.1 945.0,284.0 953.0,286.8 961.0,288.6 969.0,288.9 977.0,287.6 985.0,289.8 993.0,288.7 1001.0,288.8 1009.0,290.8 1017.0,295.3 1025.0,302.1 1033.0,307.0 1041.0,315.9 1049.0,330.3 1057.0,341.4 1065.0,350.5 1073.0,357.5 1081.0,371.2 1089.0,384.4 1097.0,396.9 1105.0,408.8 1113.0,423.5 1121.0,431.8 1129.0,433.5 1137.0,441.1 1145.0,446.8 1153.0,451.3 1161.0,457.1 1169.0,460.9 1177.0,465.2 1185.0,468.8 1193.0,473.9 1201.0,472.0 1209.0,473.0 1217.0,473.0 1225.0,469.7 1233.0,470.4 1241.0,472.0 1249.0,471.5 1257.0,471.9 1265.0,474.2 1273.0,473.7 1281.0,479.0 1289.0,479.1 1297.0,479.3 1305.0,479.9 1313.0,483.5 1321.0,488.0 1329.0,492.1 1337.0,491.8 1345.0,487.4 1353.0,485.0 1361.0,486.5 1369.0,485.3 1377.0,481.3 1385.0,479.7 1393.0,473.8 1401.0,469.0 1409.0,464.8 1417.0,458.7 1425.0,453.5 1433.0,444.3 1441.0,435.2 1449.0,426.2 1457.0,415.8 1465.0,405.2 1473.0,393.9 1481.0,382.0 1489.0,373.0 1497.0,364.4 1505.0,364.4 1513.0,366.5" fill="none" stroke="#A51C1C" stroke-width="2" stroke-linejoin="round" shape-rendering="crispEdges" />
<polyline points="1.0,529.0 9.0,533.4 17.0,536.1 25.0,537.0 33.0,543.7 41.0,550.7 49.0,559.0 57.0,563.8 65.0,555.0 73.0,546.7 81.0,538.8 89.0,528.8 97.0,526.8 105.0,526.7 113.0,525.7 121.0,522.6 129.0,521.1 137.0,512.9 145.0,502.2 153.0,497.4 161.0,488.7 169.0,465.1 177.0,450.7 185.0,438.6 193.0,435.1 201.0,432.2 209.0,429.6 217.0,428.5 225.0,430.1 233.0,430.0 241.0,430.2 249.0,430.0 257.0,424.2 265.0,423.2 273.0,426.5 281.0,432.6 289.0,442.0 297.0,452.9 305.0,458.2 313.0,461.4 321.0,456.1 329.0,453.0 337.0,434.9 345.0,421.2 353.0,405.0 361.0,387.8 369.0,373.6 377.0,358.9 385.0,345.9 393.0,332.9 401.0,324.7 409.0,324.3 417.0,325.6 425.0,327.3 433.0,335.3 441.0,336.6 449.0,338.6 457.0,338.0 465.0,325.7 473.0,322.1 481.0,313.0 489.0,302.2 497.0,289.3 505.0,284.4 513.0,284.9 521.0,289.5 529.0,291.4 537.0,294.7 545.0,296.8 553.0,304.1 561.0,306.7 569.0,310.5 577.0,314.9 585.0,318.3 593.0,320.1 601.0,318.4 609.0,307.2 617.0,301.1 625.0,283.1 633.0,265.2 641.0,256.4 649.0,248.2 657.0,244.7 665.0,232.8 673.0,232.2 681.0,228.3 689.0,226.6 697.0,217.0 705.0,206.1 713.0,206.6 721.0,204.8 729.0,200.4 737.0,212.3 745.0,229.0 753.0,244.2 761.0,252.8 769.0,261.3 777.0,269.8 785.0,277.2 793.0,287.1 801.0,295.1 809.0,303.5 817.0,310.4 825.0,310.5 833.0,308.9 841.0,300.4 849.0,294.6 857.0,289.4 865.0,287.3 873.0,283.1 881.0,282.1 889.0,288.2 897.0,293.8 905.0,299.5 913.0,295.6 921.0,292.7 929.0,283.2 937.0,281.7 945.0,282.0 953.0,286.8 961.0,289.8 969.0,290.0 977.0,287.8 985.0,291.2 993.0,289.1 1001.0,289.2 1009.0,292.3 1017.0,299.3 1025.0,309.4 1033.0,315.6 1041.0,328.2 1049.0,348.9 1057.0,362.8 1065.0,373.1 1073.0,379.9 1081.0,397.3 1089.0,413.2 1097.0,427.4 1105.0,440.4 1113.0,457.6 1121.0,464.0 1129.0,460.2 1137.0,467.1 1145.0,471.0 1153.0,473.4 1161.0,478.3 1169.0,480.0 1177.0,483.1 1185.0,485.3 1193.0,490.2 1201.0,483.9 1209.0,483.1 1217.0,481.1 1225.0,474.2 1233.0,474.4 1241.0,476.2 1249.0,474.5 1257.0,474.6 1265.0,477.7 1273.0,476.2 1281.0,484.2 1289.0,483.3 1297.0,482.8 1305.0,483.1 1313.0,488.1 1321.0,494.4 1329.0,499.7 1337.0,497.7 1345.0,489.5 1353.0,485.2 1361.0,487.5 1369.0,485.5 1377.0,479.1 1385.0,477.0 1393.0,468.1 1401.0,461.4 1409.0,456.3 1417.0,448.3 1425.0,442.0 1433.0,429.6 1441.0,417.9 1449.0,407.0 1457.0,394.2 1465.0,381.5 1473.0,368.3 1481.0,354.3 1489.0,345.4 1497.0,337.3 1505.0,342.6 1513.0,350.3" fill="none" stroke="#000000" stroke-width="2" stroke-linejoin="round" shape-rendering="crispEdges" />
<line x1="1.5" y1="482" x2="1.5" y2="529" stroke="#000" stroke-width="1" />
<rect x="-0.5" y="513.5" width="4" height="4" fill="#32CD32" stroke="#000" stroke-width="1" />
<line x1="9.5" y1="501" x2="9.5" y2="577" stroke="#000" stroke-width="1" />
<rect x="7.5" y="510.5" width="4" height="41" fill="#FF0000" stroke="#000" stroke-width="1" />
<line x1="17.5" y1="535" x2="17.5" y2="573" stroke="#000" stroke-width="1" />
<rect x="15.5" y="547.5" width="4" height="9" fill="#32CD32" stroke="#000" stroke-width="1" />
<line x1="25.5" y1="523" x2="25.5" y2="567" stroke="#000" stroke-width="1" />
<rect x="23.5" y="541.5" width="4" height="6" fill="#32CD32" stroke="#000" stroke-width="1" />
<line x1="33.5" y1="521" x2="33.5" y2="581" stroke="#000" stroke-width="1" />
<rect x="31.5" y="530.5" width="4" height="40" fill="#FF0000" stroke="#000" stroke-width="1" />
<line x1="41.5" y1="561" x2="41.5" y2="590" stroke="#000" stroke-width="1" />
<rect x="39.5" y="577.5" width="4" height="2" fill="#FF0000" stroke="#000" stroke-width="1" />
<line x1="49.5" y1="572" x2="49.5" y2="598" stroke="#000" stroke-width="1" />
<rect x="47.5" y="583.5" width="4" height="9" fill="#FF0000" stroke="#000" stroke-width="1" />
<line x1="57.5" y1="572" x2="57.5" y2="615" stroke="#000" stroke-width="1" />
<rect x="55.5" y="583.5" width="4" height="14" fill="#32CD32" stroke="#000" stroke-width="1" />
<line x1="65.5" y1="509" x2="65.5" y2="595" stroke="#000" stroke-width="1" />
<rect x="63.5" y="520.5" width="4" height="68" fill="#32CD32" stroke="#000" stroke-width="1" />
<line x1="73.5" y1="502" x2="73.5" y2="531" stroke="#000" stroke-width="1" />
<rect x="71.5" y="509.5" width="4" height="4" fill="#FF0000" stroke="#000" stroke-width="1" />
<line x1="81.5" y1="493" x2="81.5" y2="528" stroke="#000" stroke-width="1" />
<rect x="79.5" y="507.5" width="4" height="9" fill="#32CD32" stroke="#000" stroke-width="1" />
<line x1="89.5" y1="485" x2="89.5" y2="516" stroke="#000" stroke-width="1" />
<rect x="87.5" y="489.5" width="4" height="22" fill="#32CD32" stroke="#000" stroke-width="1" />
<line x1="97.5" y1="482" x2="97.5" y2="524" stroke="#000" stroke-width="1" />
<rect x="95.5" y="492.5" width="4" height="27" fill="#FF0000" stroke="#000" stroke-width="1" />
<line x1="105.5" y1="509" x2="105.5" y2="531" stroke="#000" stroke-width="1" />
<rect x="103.5" y="520.5" width="4" height="6" fill="#FF0000" stroke="#000" stroke-width="1" />
<line x1="113.5" y1="500" x2="113.5" y2="533" stroke="#000" stroke-width="1" />
<rect x="111.5" y="522.5" width="4" height="8" fill="#32CD32" stroke="#000" stroke-width="1" />
<line x1="121.5" y1="492" x2="121.5" y2="530" stroke="#000" stroke-width="1" />
<rect x="119.5" y="510.5" width="4" height="16" fill="#32CD32" stroke="#000" stroke-width="1" />
<line x1="129.5" y1="494" x2="129.5" y2="521" stroke="#000" stroke-width="1" />
<rect x="127.5" y="510.5" width="4" height="5" fill="#FF0000" stroke="#000" stroke-width="1" />
<line x1="137.5" y1="476" x2="137.5" y2="524" stroke="#000" stroke-width="1" />
<rect x="135.5" y="480.5" width="4" height="36" fill="#32CD32" stroke="#000" stroke-width="1" />
<line x1="145.5" y1="450" x2="145.5" y2="494" stroke="#000" stroke-width="1" />
<rect x="143.5" y="460.5" width="4" height="23" fill="#32CD32" stroke="#000" stroke-width="1" />
<line x1="153.5" y1="450" x2="153.5" y2="490" stroke="#000" stroke-width="1" />
<rect x="151.5" y="454.5" width="4" height="24" fill="#FF0000" stroke="#000" stroke-width="1" />
<line x1="161.5" y1="451" x2="161.5" y2="486" stroke="#000" stroke-width="1" />
<rect x="159.5" y="454.5" width="4" height="28" fill="#32CD32" stroke="#000" stroke-width="1" />
<line x1="169.5" y1="364" x2="169.5" y2="467" stroke="#000" stroke-width="1" />
<rect x="167.5" y="371.5" width="4" height="91" fill="#32CD32" stroke="#000" stroke-width="1" />
<line x1="177.5" y1="364" x2="177.5" y2="397" stroke="#000" stroke-width="1" />
<rect x="175.5" y="376.5" width="4" height="17" fill="#FF0000" stroke="#000" stroke-width="1" />
<line x1="185.5" y1="376" x2="185.5" y2="403" stroke="#000" stroke-width="1" />
<rect x="183.5" y="390.5" width="4" height="6" fill="#32CD32" stroke="#000" stroke-width="1" />
<line x1="193.5" y1="379" x2="193.5" y2="427" stroke="#000" stroke-width="1" />
<rect x="191.5" y="388.5" width="4" height="33" fill="#FF0000" stroke="#000" stroke-width="1" />
<line x1="201.5" y1="393" x2="201.5" y2="437" stroke="#000" stroke-width="1" />
<rect x="199.5" y="421.5" width="4" height="4" fill="#32CD32" stroke="#000" stroke-width="1" />
<line x1="209.5" y1="406" x2="209.5" y2="433" stroke="#000" stroke-width="1" />
<rect x="207.5" y="419.5" width="4" height="4" fill="#32CD32" stroke="#000" stroke-width="1" />
<line x1="217.5" y1="410" x2="217.5" y2="433" stroke="#000" stroke-width="1" />
<rect x="215.5" y="424.5" width="4" height="7" fill="#32CD32" stroke="#000" stroke-width="1" />
<line x1="225.5" y1="422" x2="225.5" y2="448" stroke="#000" stroke-width="1" />
<rect x="223.5" y="427.5" width="4" height="9" fill="#FF0000" stroke="#000" stroke-width="1" />
<line x1="233.5" y1="410" x2="233.5" y2="443" stroke="#000" stroke-width="1" />
<line x1="231" y1="430.5" x2="236" y2="430.5" stroke="#000" stroke-width="1" />
<line x1="241.5" y1="400" x2="241.5" y2="436" stroke="#000" stroke-width="1" />
<rect x="239.5" y="431.5" width="4" height="3" fill="#32CD32" stroke="#000" stroke-width="1" />
<line x1="249.5" y1="410" x2="249.5" y2="432" stroke="#000" stroke-width="1" />
<line x1="247" y1="429.5" x2="252" y2="429.5" stroke="#000" stroke-width="1" />
<line x1="257.5" y1="390" x2="257.5" y2="439" stroke="#000" stroke-width="1" />
<rect x="255.5" y="401.5" width="4" height="22" fill="#32CD32" stroke="#000" stroke-width="1" />
<line x1="265.5" y1="398" x2="265.5" y2="428" stroke="#000" stroke-width="1" />
<rect x="263.5" y="404.5" width="4" height="16" fill="#FF0000" stroke="#000" stroke-width="1" />
<line x1="273.5" y1="409" x2="273.5" y2="459" stroke="#000" stroke-width="1" />
<rect x="271.5" y="421.5" width="4" height="19" fill="#FF0000" stroke="#000" stroke-width="1" />
<line x1="281.5" y1="435" x2="281.5" y2="465" stroke="#000" stroke-width="1" />
<rect x="279.5" y="443.5" width="4" height="14" fill="#FF0000" stroke="#000" stroke-width="1" />
<line x1="289.5" y1="453" x2="289.5" y2="488" stroke="#000" stroke-width="1" />
<rect x="287.5" y="463.5" width="4" height="17" fill="#FF0000" stroke="#000" stroke-width="1" />
<line x1="297.5" y1="461" x2="297.5" y2="500" stroke="#000" stroke-width="1" />
<rect x="295.5" y="483.5" width="4" height="13" fill="#FF0000" stroke="#000" stroke-width="1" />
<line x1="305.5" y1="472" x2="305.5" y2="501" stroke="#000" stroke-width="1" />
<rect x="303.5" y="480.5" width="4" height="19" fill="#32CD32" stroke="#000" stroke-width="1" />
<line x1="313.5" y1="461" x2="313.5" y2="488" stroke="#000" stroke-width="1" />
<line x1="311" y1="474.5" x2="316" y2="474.5" stroke="#000" stroke-width="1" />
<line x1="321.5" y1="430" x2="321.5" y2="485" stroke="#000" stroke-width="1" />
<rect x="319.5" y="435.5" width="4" height="47" fill="#32CD32" stroke="#000" stroke-width="1" />
<line x1="329.5" y1="416" x2="329.5" y2="451" stroke="#000" stroke-width="1" />
<line x1="327" y1="440.5" x2="332" y2="440.5" stroke="#000" stroke-width="1" />
<line x1="337.5" y1="349" x2="337.5" y2="453" stroke="#000" stroke-width="1" />
<rect x="335.5" y="362.5" width="4" height="82" fill="#32CD32" stroke="#000" stroke-width="1" />
<line x1="345.5" y1="342" x2="345.5" y2="377" stroke="#000" stroke-width="1" />
<line x1="343" y1="366.5" x2="348" y2="366.5" stroke="#000" stroke-width="1" />
<line x1="353.5" y1="336" x2="353.5" y2="378" stroke="#000" stroke-width="1" />
<rect x="351.5" y="340.5" width="4" height="36" fill="#32CD32" stroke="#000" stroke-width="1" />
<line x1="361.5" y1="315" x2="361.5" y2="347" stroke="#000" stroke-width="1" />
<rect x="359.5" y="319.5" width="4" height="22" fill="#32CD32" stroke="#000" stroke-width="1" />
<line x1="369.5" y1="307" x2="369.5" y2="339" stroke="#000" stroke-width="1" />
<rect x="367.5" y="317.5" width="4" height="5" fill="#32CD32" stroke="#000" stroke-width="1" />
<line x1="377.5" y1="293" x2="377.5" y2="328" stroke="#000" stroke-width="1" />
<rect x="375.5" y="300.5" width="4" height="16" fill="#32CD32" stroke="#000" stroke-width="1" />
<line x1="385.5" y1="281" x2="385.5" y2="314" stroke="#000" stroke-width="1" />
<rect x="383.5" y="294.5" width="4" height="15" fill="#32CD32" stroke="#000" stroke-width="1" />
<line x1="393.5" y1="272" x2="393.5" y2="303" stroke="#000" stroke-width="1" />
<rect x="391.5" y="281.5" width="4" height="16" fill="#32CD32" stroke="#000" stroke-width="1" />
<line x1="401.5" y1="275" x2="401.5" y2="309" stroke="#000" stroke-width="1" />
<rect x="399.5" y="283.5" width="4" height="9" fill="#FF0000" stroke="#000" stroke-width="1" />
<line x1="409.5" y1="281" x2="409.5" y2="326" stroke="#000" stroke-width="1" />
<rect x="407.5" y="294.5" width="4" height="29" fill="#FF0000" stroke="#000" stroke-width="1" />
<line x1="417.5" y1="314" x2="417.5" y2="341" stroke="#000" stroke-width="1" />
<rect x="415.5" y="325.5" width="4" height="6" fill="#FF0000" stroke="#000" stroke-width="1" />
<line x1="425.5" y1="322" x2="425.5" y2="343" stroke="#000" stroke-width="1" />
<rect x="423.5" y="334.5" width="4" height="6" fill="#32CD32" stroke="#000" stroke-width="1" />
<line x1="433.5" y1="320" x2="433.5" y2="375" stroke="#000" stroke-width="1" />
<rect x="431.5" y="325.5" width="4" height="42" fill="#FF0000" stroke="#000" stroke-width="1" />
<line x1="441.5" y1="340" x2="441.5" y2="367" stroke="#000" stroke-width="1" />
<rect x="439.5" y="342.5" width="4" height="24" fill="#32CD32" stroke="#000" stroke-width="1" />
<line x1="449.5" y1="286" x2="449.5" y2="351" stroke="#000" stroke-width="1" />
<line x1="447" y1="346.5" x2="452" y2="346.5" stroke="#000" stroke-width="1" />
<line x1="457.5" y1="326" x2="457.5" y2="360" stroke="#000" stroke-width="1" />
<rect x="455.5" y="336.5" width="4" height="15" fill="#32CD32" stroke="#000" stroke-width="1" />
<line x1="465.5" y1="268" x2="465.5" y2="346" stroke="#000" stroke-width="1" />
<rect x="463.5" y="276.5" width="4" height="60" fill="#32CD32" stroke="#000" stroke-width="1" />
<line x1="473.5" y1="282" x2="473.5" y2="318" stroke="#000" stroke-width="1" />
<rect x="471.5" y="285.5" width="4" height="23" fill="#FF0000" stroke="#000" stroke-width="1" />
<line x1="481.5" y1="258" x2="481.5" y2="317" stroke="#000" stroke-width="1" />
<rect x="479.5" y="276.5" width="4" height="38" fill="#32CD32" stroke="#000" stroke-width="1" />
<line x1="489.5" y1="248" x2="489.5" y2="283" stroke="#000" stroke-width="1" />
<rect x="487.5" y="259.5" width="4" height="20" fill="#32CD32" stroke="#000" stroke-width="1" />
<line x1="497.5" y1="231" x2="497.5" y2="283" stroke="#000" stroke-width="1" />
<rect x="495.5" y="238.5" width="4" height="23" fill="#32CD32" stroke="#000" stroke-width="1" />
<line x1="505.5" y1="214" x2="505.5" y2="270" stroke="#000" stroke-width="1" />
<rect x="503.5" y="241.5" width="4" height="24" fill="#FF0000" stroke="#000" stroke-width="1" />
<line x1="513.5" y1="252" x2="513.5" y2="292" stroke="#000" stroke-width="1" />
<rect x="511.5" y="261.5" width="4" height="26" fill="#FF0000" stroke="#000" stroke-width="1" />
<line x1="521.5" y1="258" x2="521.5" y2="313" stroke="#000" stroke-width="1" />
<rect x="519.5" y="289.5" width="4" height="19" fill="#FF0000" stroke="#000" stroke-width="1" />
<line x1="529.5" y1="291" x2="529.5" y2="326" stroke="#000" stroke-width="1" />
<rect x="527.5" y="299.5" width="4" height="13" fill="#32CD32" stroke="#000" stroke-width="1" />
<line x1="537.5" y1="296" x2="537.5" y2="321" stroke="#000" stroke-width="1" />
<rect x="535.5" y="303.5" width="4" height="5" fill="#FF0000" stroke="#000" stroke-width="1" />
<line x1="545.5" y1="289" x2="545.5" y2="326" stroke="#000" stroke-width="1" />
<rect x="543.5" y="305.5" width="4" height="8" fill="#32CD32" stroke="#000" stroke-width="1" />
<line x1="553.5" y1="316" x2="553.5" y2="340" stroke="#000" stroke-width="1" />
<rect x="551.5" y="333.5" width="4" height="4" fill="#32CD32" stroke="#000" stroke-width="1" />
<line x1="561.5" y1="303" x2="561.5" y2="327" stroke="#000" stroke-width="1" />
<rect x="559.5" y="317.5" width="4" height="8" fill="#32CD32" stroke="#000" stroke-width="1" />
<line x1="569.5" y1="300" x2="569.5" y2="332" stroke="#000" stroke-width="1" />
<rect x="567.5" y="317.5" width="4" height="9" fill="#FF0000" stroke="#000" stroke-width="1" />
<line x1="577.5" y1="312" x2="577.5" y2="352" stroke="#000" stroke-width="1" />
<rect x="575.5" y="322.5" width="4" height="10" fill="#FF0000" stroke="#000" stroke-width="1" />
<line x1="585.5" y1="309" x2="585.5" y2="346" stroke="#000" stroke-width="1" />
<line x1="583" y1="332.5" x2="588" y2="332.5" stroke="#000" stroke-width="1" />
<line x1="593.5" y1="298" x2="593.5" y2="338" stroke="#000" stroke-width="1" />
<line x1="591" y1="327.5" x2="596" y2="327.5" stroke="#000" stroke-width="1" />
<line x1="601.5" y1="303" x2="601.5" y2="336" stroke="#000" stroke-width="1" />
<rect x="599.5" y="312.5" width="4" height="18" fill="#32CD32" stroke="#000" stroke-width="1" />
<line x1="609.5" y1="252" x2="609.5" y2="324" stroke="#000" stroke-width="1" />
<rect x="607.5" y="262.5" width="4" height="60" fill="#32CD32" stroke="#000" stroke-width="1" />
<line x1="617.5" y1="242" x2="617.5" y2="296" stroke="#000" stroke-width="1" />
<rect x="615.5" y="264.5" width="4" height="12" fill="#FF0000" stroke="#000" stroke-width="1" />
<line x1="625.5" y1="207" x2="625.5" y2="282" stroke="#000" stroke-width="1" />
<rect x="623.5" y="211.5" width="4" height="65" fill="#32CD32" stroke="#000" stroke-width="1" />
<line x1="633.5" y1="162" x2="633.5" y2="222" stroke="#000" stroke-width="1" />
<rect x="631.5" y="194.5" width="4" height="21" fill="#32CD32" stroke="#000" stroke-width="1" />
<line x1="641.5" y1="192" x2="641.5" y2="223" stroke="#000" stroke-width="1" />
<rect x="639.5" y="194.5" width="4" height="27" fill="#FF0000" stroke="#000" stroke-width="1" />
<line x1="649.5" y1="203" x2="649.5" y2="233" stroke="#000" stroke-width="1" />
<rect x="647.5" y="215.5" width="4" height="10" fill="#32CD32" stroke="#000" stroke-width="1" />
<line x1="657.5" y1="212" x2="657.5" y2="234" stroke="#000" stroke-width="1" />
<rect x="655.5" y="218.5" width="4" height="13" fill="#FF0000" stroke="#000" stroke-width="1" />
<line x1="665.5" y1="177" x2="665.5" y2="237" stroke="#000" stroke-width="1" />
<rect x="663.5" y="185.5" width="4" height="45" fill="#32CD32" stroke="#000" stroke-width="1" />
<line x1="673.5" y1="178" x2="673.5" y2="240" stroke="#000" stroke-width="1" />
<rect x="671.5" y="192.5" width="4" height="38" fill="#FF0000" stroke="#000" stroke-width="1" />
<line x1="681.5" y1="204" x2="681.5" y2="240" stroke="#000" stroke-width="1" />
<rect x="679.5" y="213.5" width="4" height="15" fill="#32CD32" stroke="#000" stroke-width="1" />
<line x1="689.5" y1="189" x2="689.5" y2="233" stroke="#000" stroke-width="1" />
<line x1="687" y1="220.5" x2="692" y2="220.5" stroke="#000" stroke-width="1" />
<line x1="697.5" y1="168" x2="697.5" y2="231" stroke="#000" stroke-width="1" />
<rect x="695.5" y="179.5" width="4" height="50" fill="#32CD32" stroke="#000" stroke-width="1" />
<line x1="705.5" y1="160" x2="705.5" y2="219" stroke="#000" stroke-width="1" />
<rect x="703.5" y="162.5" width="4" height="24" fill="#32CD32" stroke="#000" stroke-width="1" />
<line x1="713.5" y1="159" x2="713.5" y2="212" stroke="#000" stroke-width="1" />
<rect x="711.5" y="167.5" width="4" height="42" fill="#FF0000" stroke="#000" stroke-width="1" />
<line x1="721.5" y1="177" x2="721.5" y2="211" stroke="#000" stroke-width="1" />
<rect x="719.5" y="198.5" width="4" height="7" fill="#32CD32" stroke="#000" stroke-width="1" />
<line x1="729.5" y1="150" x2="729.5" y2="207" stroke="#000" stroke-width="1" />
<rect x="727.5" y="182.5" width="4" height="20" fill="#32CD32" stroke="#000" stroke-width="1" />
<line x1="737.5" y1="179" x2="737.5" y2="267" stroke="#000" stroke-width="1" />
<rect x="735.5" y="186.5" width="4" height="74" fill="#FF0000" stroke="#000" stroke-width="1" />
<line x1="745.5" y1="259" x2="745.5" y2="299" stroke="#000" stroke-width="1" />
<rect x="743.5" y="264.5" width="4" height="32" fill="#FF0000" stroke="#000" stroke-width="1" />
<line x1="753.5" y1="281" x2="753.5" y2="310" stroke="#000" stroke-width="1" />
<rect x="751.5" y="298.5" width="4" height="7" fill="#FF0000" stroke="#000" stroke-width="1" />
<line x1="761.5" y1="280" x2="761.5" y2="307" stroke="#000" stroke-width="1" />
<rect x="759.5" y="287.5" width="4" height="11" fill="#32CD32" stroke="#000" stroke-width="1" />
<line x1="769.5" y1="270" x2="769.5" y2="308" stroke="#000" stroke-width="1" />
<rect x="767.5" y="290.5" width="4" height="6" fill="#FF0000" stroke="#000" stroke-width="1" />
<line x1="777.5" y1="263" x2="777.5" y2="311" stroke="#000" stroke-width="1" />
<rect x="775.5" y="295.5" width="4" height="9" fill="#FF0000" stroke="#000" stroke-width="1" />
<line x1="785.5" y1="293" x2="785.5" y2="314" stroke="#000" stroke-width="1" />
<line x1="783" y1="307.5" x2="788" y2="307.5" stroke="#000" stroke-width="1" />
<line x1="793.5" y1="301" x2="793.5" y2="330" stroke="#000" stroke-width="1" />
<rect x="791.5" y="308.5" width="4" height="19" fill="#FF0000" stroke="#000" stroke-width="1" />
<line x1="801.5" y1="312" x2="801.5" y2="338" stroke="#000" stroke-width="1" />
<rect x="799.5" y="327.5" width="4" height="6" fill="#32CD32" stroke="#000" stroke-width="1" />
<line x1="809.5" y1="317" x2="809.5" y2="352" stroke="#000" stroke-width="1" />
<rect x="807.5" y="334.5" width="4" height="3" fill="#FF0000" stroke="#000" stroke-width="1" />
<line x1="817.5" y1="317" x2="817.5" y2="347" stroke="#000" stroke-width="1" />
<rect x="815.5" y="338.5" width="4" height="2" fill="#32CD32" stroke="#000" stroke-width="1" />
<line x1="825.5" y1="302" x2="825.5" y2="349" stroke="#000" stroke-width="1" />
<rect x="823.5" y="311.5" width="4" height="31" fill="#32CD32" stroke="#000" stroke-width="1" />
<line x1="833.5" y1="285" x2="833.5" y2="323" stroke="#000" stroke-width="1" />
<rect x="831.5" y="303.5" width="4" height="6" fill="#32CD32" stroke="#000" stroke-width="1" />
<line x1="841.5" y1="259" x2="841.5" y2="310" stroke="#000" stroke-width="1" />
<rect x="839.5" y="266.5" width="4" height="25" fill="#32CD32" stroke="#000" stroke-width="1" />
<line x1="849.5" y1="242" x2="849.5" y2="281" stroke="#000" stroke-width="1" />
<line x1="847" y1="272.5" x2="852" y2="272.5" stroke="#000" stroke-width="1" />
<line x1="857.5" y1="260" x2="857.5" y2="284" stroke="#000" stroke-width="1" />
<rect x="855.5" y="268.5" width="4" height="7" fill="#32CD32" stroke="#000" stroke-width="1" />
<line x1="865.5" y1="243" x2="865.5" y2="283" stroke="#000" stroke-width="1" />
<rect x="863.5" y="270.5" width="4" height="9" fill="#FF0000" stroke="#000" stroke-width="1" />
<line x1="873.5" y1="238" x2="873.5" y2="287" stroke="#000" stroke-width="1" />
<rect x="871.5" y="266.5" width="4" height="16" fill="#32CD32" stroke="#000" stroke-width="1" />
<line x1="881.5" y1="249" x2="881.5" y2="287" stroke="#000" stroke-width="1" />
<rect x="879.5" y="256.5" width="4" height="22" fill="#FF0000" stroke="#000" stroke-width="1" />
<line x1="889.5" y1="274" x2="889.5" y2="317" stroke="#000" stroke-width="1" />
<rect x="887.5" y="279.5" width="4" height="33" fill="#FF0000" stroke="#000" stroke-width="1" />
<line x1="897.5" y1="305" x2="897.5" y2="324" stroke="#000" stroke-width="1" />
<rect x="895.5" y="316.5" width="4" height="6" fill="#32CD32" stroke="#000" stroke-width="1" />
<line x1="905.5" y1="289" x2="905.5" y2="326" stroke="#000" stroke-width="1" />
<line x1="903" y1="322.5" x2="908" y2="322.5" stroke="#000" stroke-width="1" />
<line x1="913.5" y1="268" x2="913.5" y2="318" stroke="#000" stroke-width="1" />
<rect x="911.5" y="280.5" width="4" height="36" fill="#32CD32" stroke="#000" stroke-width="1" />
<line x1="921.5" y1="275" x2="921.5" y2="289" stroke="#000" stroke-width="1" />
<rect x="919.5" y="281.5" width="4" height="3" fill="#32CD32" stroke="#000" stroke-width="1" />
<line x1="929.5" y1="229" x2="929.5" y2="287" stroke="#000" stroke-width="1" />
<rect x="927.5" y="245.5" width="4" height="38" fill="#32CD32" stroke="#000" stroke-width="1" />
<line x1="937.5" y1="232" x2="937.5" y2="280" stroke="#000" stroke-width="1" />
<rect x="935.5" y="248.5" width="4" height="28" fill="#FF0000" stroke="#000" stroke-width="1" />
<line x1="945.5" y1="236" x2="945.5" y2="304" stroke="#000" stroke-width="1" />
<rect x="943.5" y="267.5" width="4" height="16" fill="#FF0000" stroke="#000" stroke-width="1" />
<line x1="953.5" y1="292" x2="953.5" y2="312" stroke="#000" stroke-width="1" />
<rect x="951.5" y="295.5" width="4" height="11" fill="#FF0000" stroke="#000" stroke-width="1" />
<line x1="961.5" y1="296" x2="961.5" y2="326" stroke="#000" stroke-width="1" />
<rect x="959.5" y="302.5" width="4" height="11" fill="#32CD32" stroke="#000" stroke-width="1" />
<line x1="969.5" y1="265" x2="969.5" y2="314" stroke="#000" stroke-width="1" />
<rect x="967.5" y="291.5" width="4" height="13" fill="#32CD32" stroke="#000" stroke-width="1" />
<line x1="977.5" y1="260" x2="977.5" y2="293" stroke="#000" stroke-width="1" />
<rect x="975.5" y="279.5" width="4" height="9" fill="#32CD32" stroke="#000" stroke-width="1" />
<line x1="985.5" y1="270" x2="985.5" y2="309" stroke="#000" stroke-width="1" />
<rect x="983.5" y="278.5" width="4" height="27" fill="#FF0000" stroke="#000" stroke-width="1" />
<line x1="993.5" y1="272" x2="993.5" y2="318" stroke="#000" stroke-width="1" />
<rect x="991.5" y="281.5" width="4" height="25" fill="#32CD32" stroke="#000" stroke-width="1" />
<line x1="1001.5" y1="274" x2="1001.5" y2="292" stroke="#000" stroke-width="1" />
<rect x="999.5" y="281.5" width="4" height="9" fill="#FF0000" stroke="#000" stroke-width="1" />
<line x1="1009.5" y1="274" x2="1009.5" y2="312" stroke="#000" stroke-width="1" />
<rect x="1007.5" y="296.5" width="4" height="8" fill="#FF0000" stroke="#000" stroke-width="1" />
<line x1="1017.5" y1="302" x2="1017.5" y2="329" stroke="#000" stroke-width="1" />
<rect x="1015.5" y="310.5" width="4" height="17" fill="#FF0000" stroke="#000" stroke-width="1" />
<line x1="1025.5" y1="311" x2="1025.5" y2="354" stroke="#000" stroke-width="1" />
<rect x="1023.5" y="327.5" width="4" height="23" fill="#FF0000" stroke="#000" stroke-width="1" />
<line x1="1033.5" y1="328" x2="1033.5" y2="379" stroke="#000" stroke-width="1" />
<rect x="1031.5" y="341.5" width="4" height="10" fill="#32CD32" stroke="#000" stroke-width="1" />
<line x1="1041.5" y1="331" x2="1041.5" y2="382" stroke="#000" stroke-width="1" />
<rect x="1039.5" y="344.5" width="4" height="34" fill="#FF0000" stroke="#000" stroke-width="1" />
<line x1="1049.5" y1="371" x2="1049.5" y2="434" stroke="#000" stroke-width="1" />
<rect x="1047.5" y="379.5" width="4" height="53" fill="#FF0000" stroke="#000" stroke-width="1" />
<line x1="1057.5" y1="404" x2="1057.5" y2="439" stroke="#000" stroke-width="1" />
<rect x="1055.5" y="418.5" width="4" height="17" fill="#32CD32" stroke="#000" stroke-width="1" />
<line x1="1065.5" y1="396" x2="1065.5" y2="437" stroke="#000" stroke-width="1" />
<rect x="1063.5" y="408.5" width="4" height="6" fill="#FF0000" stroke="#000" stroke-width="1" />
<line x1="1073.5" y1="382" x2="1073.5" y2="421" stroke="#000" stroke-width="1" />
<rect x="1071.5" y="407.5" width="4" height="11" fill="#32CD32" stroke="#000" stroke-width="1" />
<line x1="1081.5" y1="390" x2="1081.5" y2="470" stroke="#000" stroke-width="1" />
<rect x="1079.5" y="404.5" width="4" height="63" fill="#FF0000" stroke="#000" stroke-width="1" />
<line x1="1089.5" y1="445" x2="1089.5" y2="492" stroke="#000" stroke-width="1" />
<rect x="1087.5" y="470.5" width="4" height="7" fill="#FF0000" stroke="#000" stroke-width="1" />
<line x1="1097.5" y1="464" x2="1097.5" y2="508" stroke="#000" stroke-width="1" />
<rect x="1095.5" y="482.5" width="4" height="2" fill="#FF0000" stroke="#000" stroke-width="1" />
<line x1="1105.5" y1="448" x2="1105.5" y2="499" stroke="#000" stroke-width="1" />
<rect x="1103.5" y="477.5" width="4" height="15" fill="#FF0000" stroke="#000" stroke-width="1" />
<line x1="1113.5" y1="489" x2="1113.5" y2="542" stroke="#000" stroke-width="1" />
<rect x="1111.5" y="493.5" width="4" height="33" fill="#FF0000" stroke="#000" stroke-width="1" />
<line x1="1121.5" y1="473" x2="1121.5" y2="537" stroke="#000" stroke-width="1" />
<rect x="1119.5" y="489.5" width="4" height="37" fill="#32CD32" stroke="#000" stroke-width="1" />
<line x1="1129.5" y1="442" x2="1129.5" y2="500" stroke="#000" stroke-width="1" />
<rect x="1127.5" y="445.5" width="4" height="47" fill="#32CD32" stroke="#000" stroke-width="1" />
<line x1="1137.5" y1="423" x2="1137.5" y2="505" stroke="#000" stroke-width="1" />
<rect x="1135.5" y="445.5" width="4" height="50" fill="#FF0000" stroke="#000" stroke-width="1" />
<line x1="1145.5" y1="452" x2="1145.5" y2="511" stroke="#000" stroke-width="1" />
<rect x="1143.5" y="486.5" width="4" height="13" fill="#32CD32" stroke="#000" stroke-width="1" />
<line x1="1153.5" y1="464" x2="1153.5" y2="496" stroke="#000" stroke-width="1" />
<rect x="1151.5" y="483.5" width="4" height="8" fill="#32CD32" stroke="#000" stroke-width="1" />
<line x1="1161.5" y1="475" x2="1161.5" y2="519" stroke="#000" stroke-width="1" />
<rect x="1159.5" y="484.5" width="4" height="14" fill="#FF0000" stroke="#000" stroke-width="1" />
<line x1="1169.5" y1="478" x2="1169.5" y2="523" stroke="#000" stroke-width="1" />
<rect x="1167.5" y="487.5" width="4" height="15" fill="#32CD32" stroke="#000" stroke-width="1" />
<line x1="1177.5" y1="475" x2="1177.5" y2="503" stroke="#000" stroke-width="1" />
<rect x="1175.5" y="486.5" width="4" height="10" fill="#FF0000" stroke="#000" stroke-width="1" />
<line x1="1185.5" y1="475" x2="1185.5" y2="505" stroke="#000" stroke-width="1" />
<rect x="1183.5" y="483.5" width="4" height="11" fill="#FF0000" stroke="#000" stroke-width="1" />
<line x1="1193.5" y1="484" x2="1193.5" y2="517" stroke="#000" stroke-width="1" />
<rect x="1191.5" y="496.5" width="4" height="14" fill="#FF0000" stroke="#000" stroke-width="1" />
<line x1="1201.5" y1="450" x2="1201.5" y2="514" stroke="#000" stroke-width="1" />
<rect x="1199.5" y="459.5" width="4" height="52" fill="#32CD32" stroke="#000" stroke-width="1" />
<line x1="1209.5" y1="447" x2="1209.5" y2="484" stroke="#000" stroke-width="1" />
<rect x="1207.5" y="460.5" width="4" height="20" fill="#FF0000" stroke="#000" stroke-width="1" />
<line x1="1217.5" y1="442" x2="1217.5" y2="479" stroke="#000" stroke-width="1" />
<rect x="1215.5" y="473.5" width="4" height="3" fill="#32CD32" stroke="#000" stroke-width="1" />
<line x1="1225.5" y1="438" x2="1225.5" y2="471" stroke="#000" stroke-width="1" />
<rect x="1223.5" y="446.5" width="4" height="22" fill="#32CD32" stroke="#000" stroke-width="1" />
<line x1="1233.5" y1="440" x2="1233.5" y2="478" stroke="#000" stroke-width="1" />
<rect x="1231.5" y="450.5" width="4" height="25" fill="#FF0000" stroke="#000" stroke-width="1" />
<line x1="1241.5" y1="456" x2="1241.5" y2="487" stroke="#000" stroke-width="1" />
<rect x="1239.5" y="465.5" width="4" height="19" fill="#FF0000" stroke="#000" stroke-width="1" />
<line x1="1249.5" y1="450" x2="1249.5" y2="488" stroke="#000" stroke-width="1" />
<rect x="1247.5" y="468.5" width="4" height="16" fill="#32CD32" stroke="#000" stroke-width="1" />
<line x1="1257.5" y1="458" x2="1257.5" y2="479" stroke="#000" stroke-width="1" />
<rect x="1255.5" y="466.5" width="4" height="9" fill="#FF0000" stroke="#000" stroke-width="1" />
<line x1="1265.5" y1="447" x2="1265.5" y2="493" stroke="#000" stroke-width="1" />
<rect x="1263.5" y="454.5" width="4" height="36" fill="#FF0000" stroke="#000" stroke-width="1" />
<line x1="1273.5" y1="450" x2="1273.5" y2="496" stroke="#000" stroke-width="1" />
<rect x="1271.5" y="470.5" width="4" height="20" fill="#32CD32" stroke="#000" stroke-width="1" />
<line x1="1281.5" y1="456" x2="1281.5" y2="519" stroke="#000" stroke-width="1" />
<rect x="1279.5" y="472.5" width="4" height="44" fill="#FF0000" stroke="#000" stroke-width="1" />
<line x1="1289.5" y1="470" x2="1289.5" y2="523" stroke="#000" stroke-width="1" />
<rect x="1287.5" y="480.5" width="4" height="40" fill="#32CD32" stroke="#000" stroke-width="1" />
<line x1="1297.5" y1="466" x2="1297.5" y2="497" stroke="#000" stroke-width="1" />
<line x1="1295" y1="481.5" x2="1300" y2="481.5" stroke="#000" stroke-width="1" />
<line x1="1305.5" y1="472" x2="1305.5" y2="496" stroke="#000" stroke-width="1" />
<line x1="1303" y1="484.5" x2="1308" y2="484.5" stroke="#000" stroke-width="1" />
<line x1="1313.5" y1="473" x2="1313.5" y2="528" stroke="#000" stroke-width="1" />
<rect x="1311.5" y="480.5" width="4" height="28" fill="#FF0000" stroke="#000" stroke-width="1" />
<line x1="1321.5" y1="496" x2="1321.5" y2="528" stroke="#000" stroke-width="1" />
<rect x="1319.5" y="505.5" width="4" height="15" fill="#FF0000" stroke="#000" stroke-width="1" />
<line x1="1329.5" y1="504" x2="1329.5" y2="537" stroke="#000" stroke-width="1" />
<rect x="1327.5" y="516.5" width="4" height="5" fill="#FF0000" stroke="#000" stroke-width="1" />
<line x1="1337.5" y1="483" x2="1337.5" y2="531" stroke="#000" stroke-width="1" />
<rect x="1335.5" y="490.5" width="4" height="30" fill="#32CD32" stroke="#000" stroke-width="1" />
<line x1="1345.5" y1="451" x2="1345.5" y2="487" stroke="#000" stroke-width="1" />
<rect x="1343.5" y="456.5" width="4" height="28" fill="#32CD32" stroke="#000" stroke-width="1" />
<line x1="1353.5" y1="453" x2="1353.5" y2="477" stroke="#000" stroke-width="1" />
<rect x="1351.5" y="458.5" width="4" height="10" fill="#FF0000" stroke="#000" stroke-width="1" />
<line x1="1361.5" y1="451" x2="1361.5" y2="503" stroke="#000" stroke-width="1" />
<rect x="1359.5" y="459.5" width="4" height="38" fill="#FF0000" stroke="#000" stroke-width="1" />
<line x1="1369.5" y1="467" x2="1369.5" y2="501" stroke="#000" stroke-width="1" />
<rect x="1367.5" y="477.5" width="4" height="21" fill="#32CD32" stroke="#000" stroke-width="1" />
<line x1="1377.5" y1="446" x2="1377.5" y2="484" stroke="#000" stroke-width="1" />
<rect x="1375.5" y="453.5" width="4" height="22" fill="#32CD32" stroke="#000" stroke-width="1" />
<line x1="1385.5" y1="438" x2="1385.5" y2="476" stroke="#000" stroke-width="1" />
<rect x="1383.5" y="449.5" width="4" height="20" fill="#FF0000" stroke="#000" stroke-width="1" />
<line x1="1393.5" y1="425" x2="1393.5" y2="496" stroke="#000" stroke-width="1" />
<rect x="1391.5" y="432.5" width="4" height="36" fill="#32CD32" stroke="#000" stroke-width="1" />
<line x1="1401.5" y1="427" x2="1401.5" y2="450" stroke="#000" stroke-width="1" />
<line x1="1399" y1="435.5" x2="1404" y2="435.5" stroke="#000" stroke-width="1" />
<line x1="1409.5" y1="397" x2="1409.5" y2="456" stroke="#000" stroke-width="1" />
<rect x="1407.5" y="425.5" width="4" height="11" fill="#FF0000" stroke="#000" stroke-width="1" />
<line x1="1417.5" y1="388" x2="1417.5" y2="437" stroke="#000" stroke-width="1" />
<rect x="1415.5" y="416.5" width="4" height="17" fill="#32CD32" stroke="#000" stroke-width="1" />
<line x1="1425.5" y1="389" x2="1425.5" y2="421" stroke="#000" stroke-width="1" />
<rect x="1423.5" y="413.5" width="4" height="4" fill="#FF0000" stroke="#000" stroke-width="1" />
<line x1="1433.5" y1="364" x2="1433.5" y2="410" stroke="#000" stroke-width="1" />
<rect x="1431.5" y="380.5" width="4" height="26" fill="#32CD32" stroke="#000" stroke-width="1" />
<line x1="1441.5" y1="357" x2="1441.5" y2="391" stroke="#000" stroke-width="1" />
<line x1="1439" y1="371.5" x2="1444" y2="371.5" stroke="#000" stroke-width="1" />
<line x1="1449.5" y1="342" x2="1449.5" y2="382" stroke="#000" stroke-width="1" />
<rect x="1447.5" y="363.5" width="4" height="16" fill="#32CD32" stroke="#000" stroke-width="1" />
<line x1="1457.5" y1="306" x2="1457.5" y2="373" stroke="#000" stroke-width="1" />
<rect x="1455.5" y="343.5" width="4" height="20" fill="#32CD32" stroke="#000" stroke-width="1" />
<line x1="1465.5" y1="318" x2="1465.5" y2="350" stroke="#000" stroke-width="1" />
<rect x="1463.5" y="331.5" width="4" height="15" fill="#32CD32" stroke="#000" stroke-width="1" />
<line x1="1473.5" y1="303" x2="1473.5" y2="340" stroke="#000" stroke-width="1" />
<rect x="1471.5" y="315.5" width="4" height="17" fill="#32CD32" stroke="#000" stroke-width="1" />
<line x1="1481.5" y1="289" x2="1481.5" y2="336" stroke="#000" stroke-width="1" />
<rect x="1479.5" y="299.5" width="4" height="22" fill="#32CD32" stroke="#000" stroke-width="1" />
<line x1="1489.5" y1="290" x2="1489.5" y2="318" stroke="#000" stroke-width="1" />
<rect x="1487.5" y="299.5" width="4" height="11" fill="#FF0000" stroke="#000" stroke-width="1" />
<line x1="1497.5" y1="272" x2="1497.5" y2="325" stroke="#000" stroke-width="1" />
<rect x="1495.5" y="305.5" width="4" height="4" fill="#32CD32" stroke="#000" stroke-width="1" />
<line x1="1505.5" y1="287" x2="1505.5" y2="377" stroke="#000" stroke-width="1" />
<rect x="1503.5" y="306.5" width="4" height="58" fill="#FF0000" stroke="#000" stroke-width="1" />
<line x1="1513.5" y1="363" x2="1513.5" y2="383" stroke="#000" stroke-width="1" />
<rect x="1511.5" y="366.5" width="4" height="15" fill="#FF0000" stroke="#000" stroke-width="1" />
<path d="M1500,339 L1503.5,339 L1507.3,342.7 L1503.5,346.4 L1500,346.4 L1501.8,342.7 Z M1500,361.6 L1503.5,361.6 L1507.3,365.2 L1503.5,368.8 L1500,368.8 L1501.8,365.2 Z" fill="#FFFF00"/>
<line x1="1502" y1="267.5" x2="1509" y2="267.5" stroke="#FF0000" stroke-width="1" />
<line x1="1500" y1="463.5" x2="1507" y2="463.5" stroke="#0000FF" stroke-width="1" />
</g>
<path d="M4,132.8 h9.2 l-4.6,5 z" fill="#000"/>
<text x="18.69" y="139.7" font-size="12.6" fill="#000" font-weight="normal" textLength="79.01" lengthAdjust="spacingAndGlyphs" >EURNZD!,Daily</text>
<text x="105.86" y="139.7" font-size="12.6" fill="#000" font-weight="normal" textLength="195.89" lengthAdjust="spacingAndGlyphs" >2.00264 2.00359 1.99804 1.99823</text>
<text x="9.84" y="362.3" font-size="13" fill="#000" font-weight="normal" textLength="106.96" lengthAdjust="spacingAndGlyphs" >#9690544 sell 0.21</text>
<text x="9.84" y="460.3" font-size="13" fill="#000" font-weight="normal" textLength="71.39" lengthAdjust="spacingAndGlyphs" >#9690544 tp</text>
<text x="1751.19" y="217.9" font-size="36" fill="#BDB76B" font-weight="normal" textLength="86.74" lengthAdjust="spacingAndGlyphs" >+45.2</text>
<rect x="1846" y="374" width="56" height="14" fill="#000" />
<text x="1850.44" y="385.8" font-size="12.3" fill="#FFFFFF" font-weight="normal" textLength="46.48" lengthAdjust="spacingAndGlyphs" >1.99823</text>
<g clip-path="url(#cs)">
<line x1="1" y1="663.5" x2="1844" y2="663.5" stroke="#C0C0C0" stroke-width="1" stroke-dasharray="3,3"/>
<line x1="1" y1="767.5" x2="1844" y2="767.5" stroke="#C0C0C0" stroke-width="1" stroke-dasharray="3,3"/>
<polyline points="1.0,701.0 9.0,708.0 17.0,718.0 25.0,731.0 33.0,743.0 41.0,756.0 49.0,770.0 57.0,775.0 65.0,758.8 73.0,722.2 81.0,680.9 89.0,655.1 97.0,648.2 105.0,659.1 113.0,687.9 121.0,723.0 129.0,744.7 137.0,735.5 145.0,706.1 153.0,678.4 161.0,664.5 169.0,657.4 177.0,652.7 185.0,650.9 193.0,660.8 201.0,677.6 209.0,702.0 217.0,724.4 225.0,747.4 233.0,759.4 241.0,762.6 249.0,754.0 257.0,736.1 265.0,719.1 273.0,710.8 281.0,727.1 289.0,751.2 297.0,775.9 305.0,784.1 313.0,781.1 321.0,756.2 329.0,722.6 337.0,683.9 345.0,664.0 353.0,651.4 361.0,647.5 369.0,640.5 377.0,638.4 385.0,639.4 393.0,643.6 401.0,650.5 409.0,668.7 417.0,701.7 425.0,742.9 433.0,771.4 441.0,779.4 449.0,772.1 457.0,756.8 465.0,733.5 473.0,708.8 481.0,684.7 489.0,673.4 497.0,660.3 505.0,659.8 513.0,670.6 521.0,705.7 529.0,740.4 537.0,765.9 545.0,770.0 553.0,771.8 561.0,766.9 569.0,766.1 577.0,756.3 585.0,751.7 593.0,743.2 601.0,732.1 609.0,707.3 617.0,684.3 625.0,665.2 633.0,660.0 641.0,658.5 649.0,667.8 657.0,683.2 665.0,697.0 673.0,711.9 681.0,718.9 689.0,734.0 697.0,727.7 705.0,710.5 713.0,685.4 721.0,681.7 729.0,696.5 737.0,719.9 745.0,745.8 753.0,772.0 761.0,787.1 769.0,791.2 777.0,785.7 785.0,782.7 793.0,782.7 801.0,784.2 809.0,784.3 817.0,779.8 825.0,765.7 833.0,738.7 841.0,700.4 849.0,674.4 857.0,662.5 865.0,671.2 873.0,679.7 881.0,698.0 889.0,721.3 897.0,753.4 905.0,777.8 913.0,781.1 921.0,762.2 929.0,722.7 937.0,695.3 945.0,685.8 953.0,709.2 961.0,735.8 969.0,756.2 977.0,753.8 985.0,743.8 993.0,727.9 1001.0,721.1 1009.0,717.4 1017.0,732.8 1025.0,756.1 1033.0,773.1 1041.0,778.3 1049.0,776.2 1057.0,782.5 1065.0,783.9 1073.0,778.3 1081.0,771.5 1089.0,769.9 1097.0,775.7 1105.0,778.0 1113.0,779.2 1121.0,773.4 1129.0,754.6 1137.0,726.3 1145.0,704.9 1153.0,706.6 1161.0,719.9 1169.0,733.5 1177.0,740.9 1185.0,740.4 1193.0,738.5 1201.0,722.7 1209.0,711.4 1217.0,695.4 1225.0,690.1 1233.0,686.1 1241.0,692.8 1249.0,711.7 1257.0,736.7 1265.0,755.4 1273.0,760.3 1281.0,764.0 1289.0,756.4 1297.0,749.4 1305.0,727.5 1313.0,722.3 1321.0,726.3 1329.0,745.9 1337.0,751.0 1345.0,731.8 1353.0,695.9 1361.0,674.2 1369.0,674.4 1377.0,685.4 1385.0,688.7 1393.0,681.5 1401.0,673.4 1409.0,667.5 1417.0,669.9 1425.0,674.8 1433.0,675.8 1441.0,671.5 1449.0,664.3 1457.0,664.1 1465.0,668.1 1473.0,671.7 1481.0,667.4 1489.0,661.2 1497.0,661.4 1505.0,683.8 1513.0,721.0" fill="none" stroke="#FF0000" stroke-width="1" stroke-linejoin="round" shape-rendering="crispEdges" stroke-dasharray="3,2"/>
<polyline points="1.0,705.4 9.0,715.8 17.0,737.7 25.0,747.0 33.0,756.0 41.0,766.0 49.0,785.5 57.0,770.9 65.0,719.8 73.0,675.7 81.0,647.1 89.0,642.5 97.0,654.9 105.0,679.9 113.0,728.9 121.0,760.0 129.0,745.2 137.0,701.3 145.0,671.8 153.0,662.1 161.0,659.7 169.0,650.6 177.0,647.8 185.0,654.4 193.0,680.1 201.0,698.2 209.0,727.8 217.0,747.1 225.0,767.4 233.0,763.7 241.0,756.7 249.0,741.6 257.0,709.9 265.0,705.7 273.0,716.7 281.0,759.0 289.0,777.8 297.0,790.9 305.0,783.5 313.0,768.8 321.0,716.4 329.0,682.6 337.0,652.8 345.0,656.7 353.0,644.6 361.0,641.3 369.0,635.6 377.0,638.3 385.0,644.4 393.0,648.1 401.0,659.0 409.0,698.9 417.0,747.0 425.0,782.6 433.0,784.5 441.0,771.0 449.0,760.8 457.0,738.6 465.0,701.2 473.0,686.6 481.0,666.3 489.0,667.1 497.0,647.5 505.0,664.7 513.0,699.4 521.0,752.9 529.0,768.8 537.0,776.1 545.0,765.1 553.0,774.1 561.0,761.5 569.0,762.8 577.0,744.5 585.0,748.0 593.0,737.3 601.0,711.0 609.0,673.6 617.0,668.2 625.0,653.8 633.0,658.1 641.0,663.7 649.0,681.7 657.0,704.2 665.0,705.1 673.0,726.3 681.0,725.4 689.0,750.4 697.0,707.2 705.0,673.8 713.0,675.1 721.0,696.1 729.0,718.2 737.0,745.4 745.0,773.8 753.0,796.7 761.0,790.9 769.0,786.0 777.0,780.2 785.0,781.8 793.0,786.2 801.0,784.7 809.0,782.0 817.0,772.8 825.0,742.4 833.0,700.8 841.0,657.9 849.0,664.6 857.0,664.9 865.0,683.9 873.0,690.4 881.0,719.7 889.0,753.8 897.0,786.5 905.0,793.0 913.0,763.7 921.0,729.9 929.0,674.4 937.0,681.6 945.0,701.2 953.0,744.6 961.0,761.7 969.0,762.4 977.0,737.5 985.0,731.6 993.0,714.6 1001.0,717.1 1009.0,720.7 1017.0,760.7 1025.0,787.0 1033.0,771.8 1041.0,776.1 1049.0,780.7 1057.0,790.6 1065.0,780.5 1073.0,763.9 1081.0,770.1 1089.0,775.6 1097.0,781.4 1105.0,777.0 1113.0,779.2 1121.0,764.1 1129.0,720.5 1137.0,694.3 1145.0,699.9 1153.0,725.5 1161.0,734.1 1169.0,740.9 1177.0,747.7 1185.0,732.6 1193.0,735.0 1201.0,700.5 1209.0,698.8 1217.0,686.8 1225.0,684.8 1233.0,686.7 1241.0,706.8 1249.0,741.5 1257.0,761.8 1265.0,762.9 1273.0,756.1 1281.0,772.8 1289.0,740.3 1297.0,735.1 1305.0,707.2 1313.0,724.5 1321.0,747.4 1329.0,765.9 1337.0,739.8 1345.0,689.8 1353.0,658.1 1361.0,674.7 1369.0,690.4 1377.0,691.2 1385.0,684.6 1393.0,668.6 1401.0,667.0 1409.0,667.0 1417.0,675.8 1425.0,681.5 1433.0,670.1 1441.0,662.9 1449.0,659.9 1457.0,669.5 1465.0,674.8 1473.0,670.6 1481.0,656.9 1489.0,656.1 1497.0,671.4 1505.0,723.8 1513.0,767.7" fill="none" stroke="#20B2AA" stroke-width="1" stroke-linejoin="round" shape-rendering="crispEdges" />
</g>
<text x="4.62" y="642.9" font-size="12.6" fill="#000" font-weight="normal" textLength="170.43" lengthAdjust="spacingAndGlyphs" >Stoch(5,3,3) 18.6193 46.0575</text>
<line x1="1.5" y1="802" x2="1.5" y2="806" stroke="#000" stroke-width="1" />
<text x="0.18" y="817.5" font-size="12.1" fill="#000" font-weight="normal" textLength="64.64" lengthAdjust="spacingAndGlyphs" >22 Jul 2025</text>
<line x1="97.5" y1="802" x2="97.5" y2="806" stroke="#000" stroke-width="1" />
<text x="95.35" y="817.5" font-size="12.1" fill="#000" font-weight="normal" textLength="65.47" lengthAdjust="spacingAndGlyphs" >7 Aug 2025</text>
<line x1="193.5" y1="802" x2="193.5" y2="806" stroke="#000" stroke-width="1" />
<text x="191.35" y="817.5" font-size="12.1" fill="#000" font-weight="normal" textLength="72.69" lengthAdjust="spacingAndGlyphs" >25 Aug 2025</text>
<line x1="289.5" y1="802" x2="289.5" y2="806" stroke="#000" stroke-width="1" />
<text x="287.87" y="817.5" font-size="12.1" fill="#000" font-weight="normal" textLength="70.35" lengthAdjust="spacingAndGlyphs" >10 Sep 2025</text>
<line x1="385.5" y1="802" x2="385.5" y2="806" stroke="#000" stroke-width="1" />
<text x="384.19" y="817.5" font-size="12.1" fill="#000" font-weight="normal" textLength="69.73" lengthAdjust="spacingAndGlyphs" >26 Sep 2025</text>
<line x1="481.5" y1="802" x2="481.5" y2="806" stroke="#000" stroke-width="1" />
<text x="479.54" y="817.5" font-size="12.1" fill="#000" font-weight="normal" textLength="69.71" lengthAdjust="spacingAndGlyphs" >14 Oct 2025</text>
<line x1="577.5" y1="802" x2="577.5" y2="806" stroke="#000" stroke-width="1" />
<text x="575.86" y="817.5" font-size="12.1" fill="#000" font-weight="normal" textLength="69.39" lengthAdjust="spacingAndGlyphs" >29 Oct 2025</text>
<line x1="673.5" y1="802" x2="673.5" y2="806" stroke="#000" stroke-width="1" />
<text x="671.25" y="817.5" font-size="12.1" fill="#000" font-weight="normal" textLength="71.67" lengthAdjust="spacingAndGlyphs" >14 Nov 2025</text>
<line x1="769.5" y1="802" x2="769.5" y2="806" stroke="#000" stroke-width="1" />
<text x="768.18" y="817.5" font-size="12.1" fill="#000" font-weight="normal" textLength="63.01" lengthAdjust="spacingAndGlyphs" >2 Dec 2025</text>
<line x1="865.5" y1="802" x2="865.5" y2="806" stroke="#000" stroke-width="1" />
<text x="863.87" y="817.5" font-size="12.1" fill="#000" font-weight="normal" textLength="70.03" lengthAdjust="spacingAndGlyphs" >18 Dec 2025</text>
<line x1="961.5" y1="802" x2="961.5" y2="806" stroke="#000" stroke-width="1" />
<text x="959.88" y="817.5" font-size="12.1" fill="#000" font-weight="normal" textLength="61.20" lengthAdjust="spacingAndGlyphs" >7 Jan 2026</text>
<line x1="1057.5" y1="802" x2="1057.5" y2="806" stroke="#000" stroke-width="1" />
<text x="1055.88" y="817.5" font-size="12.1" fill="#000" font-weight="normal" textLength="68.01" lengthAdjust="spacingAndGlyphs" >23 Jan 2026</text>
<line x1="1153.5" y1="802" x2="1153.5" y2="806" stroke="#000" stroke-width="1" />
<text x="1151.27" y="817.5" font-size="12.1" fill="#000" font-weight="normal" textLength="69.84" lengthAdjust="spacingAndGlyphs" >10 Feb 2026</text>
<line x1="1249.5" y1="802" x2="1249.5" y2="806" stroke="#000" stroke-width="1" />
<text x="1247.68" y="817.5" font-size="12.1" fill="#000" font-weight="normal" textLength="69.52" lengthAdjust="spacingAndGlyphs" >26 Feb 2026</text>
<line x1="1345.5" y1="802" x2="1345.5" y2="806" stroke="#000" stroke-width="1" />
<text x="1343.37" y="817.5" font-size="12.1" fill="#000" font-weight="normal" textLength="69.83" lengthAdjust="spacingAndGlyphs" >13 Mar 2026</text>
<line x1="1441.5" y1="802" x2="1441.5" y2="806" stroke="#000" stroke-width="1" />
<text x="1439.68" y="817.5" font-size="12.1" fill="#000" font-weight="normal" textLength="69.72" lengthAdjust="spacingAndGlyphs" >27 Mar 2026</text>
<line x1="0" y1="826.5" x2="1908" y2="826.5" stroke="#D8D8D8" stroke-width="1" />
<rect x="0" y="828" width="1916" height="25" fill="#F0F0F0" />
<line x1="0" y1="828.5" x2="1916" y2="828.5" stroke="#000" stroke-width="1.5" />
<text x="16.41" y="845.9" font-size="15.9" fill="#6D6D6D" font-weight="normal" textLength="95.61" lengthAdjust="spacingAndGlyphs" >EURGBP!,Daily</text>
<line x1="128.3" y1="831" x2="128.3" y2="850" stroke="#808080" stroke-width="1" />
<text x="140.46" y="845.9" font-size="15.9" fill="#6D6D6D" font-weight="normal" textLength="99.34" lengthAdjust="spacingAndGlyphs" >EURNZD!,Daily</text>
<line x1="256.1" y1="831" x2="256.1" y2="850" stroke="#808080" stroke-width="1" />
<text x="267.33" y="845.9" font-size="15.9" fill="#6D6D6D" font-weight="normal" textLength="89.64" lengthAdjust="spacingAndGlyphs" >CHFJPY!,Daily</text>
<line x1="372.2" y1="831" x2="372.2" y2="850" stroke="#808080" stroke-width="1" />
<text x="383.92" y="845.9" font-size="15.9" fill="#6D6D6D" font-weight="normal" textLength="99.89" lengthAdjust="spacingAndGlyphs" >USDDKK!,Daily</text>
<line x1="500.5" y1="831" x2="500.5" y2="850" stroke="#808080" stroke-width="1" />
<text x="511.93" y="845.9" font-size="15.9" fill="#6D6D6D" font-weight="normal" textLength="85.52" lengthAdjust="spacingAndGlyphs" >USDDKK!,H4</text>
<line x1="612.1" y1="831" x2="612.1" y2="850" stroke="#808080" stroke-width="1" />
<text x="623.94" y="845.9" font-size="15.9" fill="#6D6D6D" font-weight="normal" textLength="85.02" lengthAdjust="spacingAndGlyphs" >USDDKK!,H1</text>
<line x1="724.0" y1="831" x2="724.0" y2="850" stroke="#808080" stroke-width="1" />
<text x="734.93" y="845.9" font-size="15.9" fill="#6D6D6D" font-weight="normal" textLength="95.22" lengthAdjust="spacingAndGlyphs" >USDDKK!,M15</text>
<line x1="843.9" y1="831" x2="843.9" y2="850" stroke="#808080" stroke-width="1" />
<text x="857.40" y="845.9" font-size="15.9" fill="#6D6D6D" font-weight="normal" textLength="98.60" lengthAdjust="spacingAndGlyphs" >AUDCHF!,Daily</text>
<line x1="971.9" y1="831" x2="971.9" y2="850" stroke="#808080" stroke-width="1" />
<text x="984.40" y="845.9" font-size="15.9" fill="#6D6D6D" font-weight="normal" textLength="92.58" lengthAdjust="spacingAndGlyphs" >AUDJPY!,Daily</text>
<line x1="1092.2" y1="831" x2="1092.2" y2="850" stroke="#808080" stroke-width="1" />
<text x="1104.00" y="845.9" font-size="15.9" fill="#6D6D6D" font-weight="normal" textLength="102.02" lengthAdjust="spacingAndGlyphs" >AUDCAD!,Daily</text>
<line x1="1220.2" y1="831" x2="1220.2" y2="850" stroke="#808080" stroke-width="1" />
<text x="1231.86" y="845.9" font-size="15.9" fill="#6D6D6D" font-weight="normal" textLength="95.96" lengthAdjust="spacingAndGlyphs" >USDSEK!,Daily</text>
<line x1="1343.8" y1="831" x2="1343.8" y2="850" stroke="#808080" stroke-width="1" />
<text x="1355.98" y="845.9" font-size="15.9" fill="#6D6D6D" font-weight="normal" textLength="91.71" lengthAdjust="spacingAndGlyphs" >USDJPY!,Daily</text>
<line x1="1464.3" y1="831" x2="1464.3" y2="850" stroke="#808080" stroke-width="1" />
<text x="1475.94" y="845.9" font-size="15.9" fill="#6D6D6D" font-weight="normal" textLength="100.09" lengthAdjust="spacingAndGlyphs" >USDSGD!,Daily</text>
<line x1="1592.5" y1="831" x2="1592.5" y2="850" stroke="#808080" stroke-width="1" />
<text x="1603.48" y="845.9" font-size="15.9" fill="#6D6D6D" font-weight="normal" textLength="93.08" lengthAdjust="spacingAndGlyphs" >NZDJPY!,Daily</text>
<path d="M1711.5,828 V851.5 H1838.5 V828" fill="#FFFFFF" stroke="#000" stroke-width="1.6"/>
<text x="1724.55" y="845.9" font-size="15.9" fill="#000" font-weight="normal" textLength="99.45" lengthAdjust="spacingAndGlyphs" >EURNZD!,Daily</text>
<path d="M1880,835 v8 l-5,-4 z" fill="#000"/><path d="M1899,835 v8 l5,-4 z" fill="#A0A0A0"/>
<rect x="0" y="853" width="1916" height="55" fill="#F0F0F0" />
<path d="M2,862 l7,7 M9,862 l-7,7" stroke="#000" stroke-width="1.5"/>
<defs><linearGradient id="tg" x1="0" y1="0" x2="1" y2="0"><stop offset="0" stop-color="#A8C4E4"/><stop offset="1" stop-color="#C8DCF0"/></linearGradient></defs>
<rect x="0" y="876" width="15" height="32" fill="#ADC6E5" />
<line x1="0" y1="853.5" x2="1916" y2="853.5" stroke="#FFFFFF" stroke-width="1" />
<line x1="16.5" y1="858" x2="16.5" y2="908" stroke="#A0A0A0" stroke-width="1" />
<line x1="16" y1="858.5" x2="1912" y2="858.5" stroke="#A0A0A0" stroke-width="1" />
<rect x="17" y="859" width="1872" height="25" fill="#FBFBFB" />
<rect x="17" y="884" width="1872" height="24" fill="#E9E9E9" />
<line x1="202.3" y1="859" x2="202.3" y2="883" stroke="#E0E0E0" stroke-width="1" />
<line x1="459.1" y1="859" x2="459.1" y2="883" stroke="#E0E0E0" stroke-width="1" />
<line x1="587.2" y1="859" x2="587.2" y2="883" stroke="#E0E0E0" stroke-width="1" />
<line x1="687.5" y1="859" x2="687.5" y2="883" stroke="#E0E0E0" stroke-width="1" />
<line x1="815.2" y1="859" x2="815.2" y2="883" stroke="#E0E0E0" stroke-width="1" />
<line x1="957.9" y1="859" x2="957.9" y2="883" stroke="#E0E0E0" stroke-width="1" />
<line x1="1098.9" y1="859" x2="1098.9" y2="883" stroke="#E0E0E0" stroke-width="1" />
<line x1="1241.2" y1="859" x2="1241.2" y2="883" stroke="#E0E0E0" stroke-width="1" />
<line x1="1383.3" y1="859" x2="1383.3" y2="883" stroke="#E0E0E0" stroke-width="1" />
<line x1="1524.9" y1="859" x2="1524.9" y2="883" stroke="#E0E0E0" stroke-width="1" />
<line x1="1667.0" y1="859" x2="1667.0" y2="883" stroke="#E0E0E0" stroke-width="1" />
<text x="22.31" y="877.9" font-size="15.6" fill="#000" font-weight="normal" textLength="46.00" lengthAdjust="spacingAndGlyphs" >Ordine</text>
<text x="352.14" y="877.9" font-size="15.6" fill="#000" font-weight="normal" textLength="81.35" lengthAdjust="spacingAndGlyphs" >Data/Orario</text>
<text x="550.67" y="877.9" font-size="15.6" fill="#000" font-weight="normal" textLength="31.03" lengthAdjust="spacingAndGlyphs" >Tipo</text>
<text x="649.66" y="877.9" font-size="15.6" fill="#000" font-weight="normal" textLength="31.74" lengthAdjust="spacingAndGlyphs" >Lotti</text>
<text x="752.08" y="877.9" font-size="15.6" fill="#000" font-weight="normal" textLength="57.50" lengthAdjust="spacingAndGlyphs" >Simbolo</text>
<text x="905.82" y="877.9" font-size="15.6" fill="#000" font-weight="normal" textLength="45.80" lengthAdjust="spacingAndGlyphs" >Prezzo</text>
<text x="1063.34" y="877.9" font-size="15.6" fill="#000" font-weight="normal" textLength="30.12" lengthAdjust="spacingAndGlyphs" >S / L</text>
<text x="1162.99" y="877.9" font-size="15.6" fill="#000" font-weight="normal" textLength="72.14" lengthAdjust="spacingAndGlyphs" >Take profit</text>
<text x="1331.83" y="877.9" font-size="15.6" fill="#000" font-weight="normal" textLength="45.49" lengthAdjust="spacingAndGlyphs" >Prezzo</text>
<text x="1429.26" y="877.9" font-size="15.6" fill="#000" font-weight="normal" textLength="89.84" lengthAdjust="spacingAndGlyphs" >Commissione</text>
<text x="1619.83" y="877.9" font-size="15.6" fill="#000" font-weight="normal" textLength="37.08" lengthAdjust="spacingAndGlyphs" >Swap</text>
<text x="1831.71" y="877.9" font-size="15.6" fill="#000" font-weight="normal" textLength="50.98" lengthAdjust="spacingAndGlyphs" >Profitto</text>
<path d="M444,867 h8 l-4,6 z" fill="none" stroke="#808080" stroke-width="1"/>
<text x="43.95" y="902.5" font-size="15.2" fill="#000" font-weight="normal" textLength="55.92" lengthAdjust="spacingAndGlyphs" >9693944</text>
<text x="325.60" y="902.5" font-size="15.2" fill="#000" font-weight="normal" textLength="128.57" lengthAdjust="spacingAndGlyphs" >2026.04.08 23:22:13</text>
<text x="557.42" y="902.5" font-size="15.2" fill="#000" font-weight="normal" textLength="24.42" lengthAdjust="spacingAndGlyphs" >buy</text>
<text x="654.23" y="902.5" font-size="15.2" fill="#000" font-weight="normal" textLength="27.55" lengthAdjust="spacingAndGlyphs" >0.15</text>
<text x="760.46" y="902.5" font-size="15.2" fill="#000" font-weight="normal" textLength="50.84" lengthAdjust="spacingAndGlyphs" >nzdjpy!</text>
<text x="908.36" y="902.5" font-size="15.2" fill="#000" font-weight="normal" textLength="43.62" lengthAdjust="spacingAndGlyphs" >92.330</text>
<text x="1050.36" y="902.5" font-size="15.2" fill="#000" font-weight="normal" textLength="43.52" lengthAdjust="spacingAndGlyphs" >92.330</text>
<text x="1192.16" y="902.5" font-size="15.2" fill="#000" font-weight="normal" textLength="43.74" lengthAdjust="spacingAndGlyphs" >94.172</text>
<text x="1334.36" y="902.5" font-size="15.2" fill="#000" font-weight="normal" textLength="43.55" lengthAdjust="spacingAndGlyphs" >92.724</text>
<text x="1487.36" y="902.5" font-size="15.2" fill="#000" font-weight="normal" textLength="32.43" lengthAdjust="spacingAndGlyphs" >-0.90</text>
<text x="1634.62" y="902.5" font-size="15.2" fill="#000" font-weight="normal" textLength="27.07" lengthAdjust="spacingAndGlyphs" >1.11</text>
<text x="1823.73" y="902.5" font-size="15.2" fill="#000" font-weight="normal" textLength="35.75" lengthAdjust="spacingAndGlyphs" >31.89</text>
<path d="M21,889.5 h9.5 l4.5,4.5 v11 h-14 z" fill="#FAFAFA" stroke="#707070" stroke-width="1.1"/><path d="M30.5,889.5 v4.5 h4.5" fill="none" stroke="#909090" stroke-width="0.8"/><circle cx="33.8" cy="903" r="3.8" fill="#2A9AE8" stroke="#1A6AB0" stroke-width="0.6"/>
<path d="M1870.5,891.5 l11,11 M1881.5,891.5 l-11,11" stroke="#8A8A8A" stroke-width="1.6"/>
<rect x="1889.5" y="859.5" width="19" height="49" fill="#F0F0F0" stroke="#D0D0D0" stroke-width="1" />
<rect x="1890" y="860" width="18" height="19" fill="#FFFFFF" stroke="#C8C8C8" stroke-width="1" />
<path d="M1894.5,873 l4.5,-4.5 l4.5,4.5" fill="none" stroke="#404040" stroke-width="1.2"/>
<rect x="1890" y="895" width="18" height="13" fill="#D0D0D0" />
<line x1="1910.5" y1="853" x2="1910.5" y2="908" stroke="#C0C0C0" stroke-width="1" />
</svg></body></html>
